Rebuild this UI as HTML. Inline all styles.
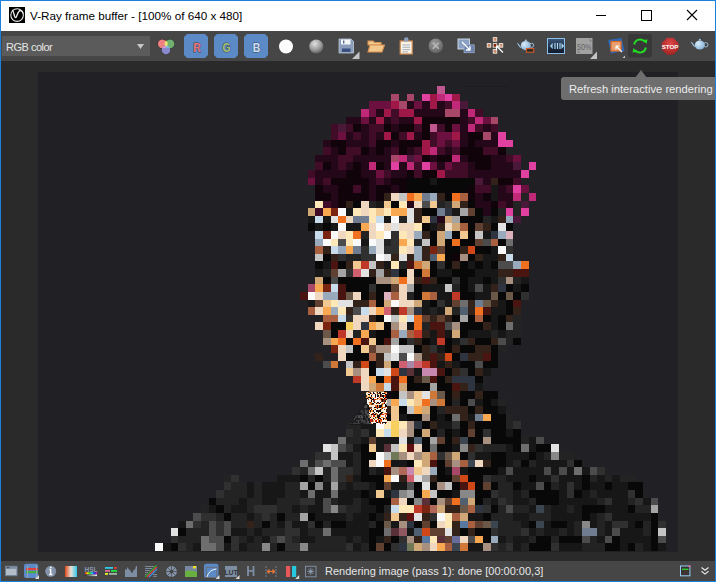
<!DOCTYPE html>
<html><head><meta charset="utf-8">
<style>
*{margin:0;padding:0;box-sizing:border-box}
html,body{width:716px;height:582px;overflow:hidden;background:#2b2b2b}
body{position:relative;font-family:"Liberation Sans",sans-serif}
.abs{position:absolute}
#win{position:absolute;left:0;top:0;width:716px;height:582px;border:1px solid #1a82dc;overflow:hidden}
#title{position:absolute;left:0;top:0;width:714px;height:30px;background:#fff}
#ttext{position:absolute;left:29px;top:8px;font-size:11.7px;color:#000;white-space:nowrap;letter-spacing:0}
#tb{position:absolute;left:0;top:30px;width:714px;height:30px;background:#464646}
#view{position:absolute;left:0;top:60px;width:714px;height:500px;background:#2a2a2a}
#img{position:absolute;left:37px;top:11px;width:640px;height:480px;background:#202025;overflow:hidden}
#sb{position:absolute;left:0;top:560px;width:714px;height:20px;background:#464646}
#stext{position:absolute;left:324px;top:4px;font-size:11px;color:#e6e6e6;white-space:nowrap}
#tip{position:absolute;left:560px;top:76px;width:160px;height:23px;background:#6e6e6e;border-radius:3px}
#tiptext{position:absolute;left:8px;top:6px;font-size:11.2px;color:#ececec;white-space:nowrap}
#dd{position:absolute;left:1px;top:5px;width:148px;height:20px;background:#5b5b5b}
#ddtext{position:absolute;left:4px;top:5px;font-size:11px;letter-spacing:-0.5px;color:#e6e6e6}
.btn{position:absolute;top:4px;width:24px;height:24px;background:#5a8ac8;border-radius:3px}
.btn span{position:absolute;left:0;top:4px;width:24px;text-align:center;font-size:14px;line-height:16px}
</style></head><body>
<div id="win">
 <div id="title">
  <svg class="abs" style="left:8px;top:6px" width="16" height="16" viewBox="9 7 16 16">
   <rect x="9" y="7" width="16" height="16" fill="#000"/>
   <circle cx="17.1" cy="15.1" r="6.3" fill="none" stroke="#e8e8e8" stroke-width="1.1"/>
   <path d="M12.2 10 C13.6 11 13.9 14 14.6 16.4 C15.2 18.2 16 17.9 16.7 16 C17.8 13 19.2 10.2 20.8 10.5 C22 10.8 22.9 12.3 23.3 13.6" fill="none" stroke="#f0f0f0" stroke-width="1.3"/>
  </svg>
  <div id="ttext">V-Ray frame buffer - [100% of 640 x 480]</div>
  <svg class="abs" style="left:593px;top:7px" width="110" height="14" viewBox="0 0 110 14">
   <path d="M2 7.5 H12" stroke="#000" stroke-width="1"/>
   <rect x="47.5" y="2.5" width="10" height="10" fill="none" stroke="#000" stroke-width="1"/>
   <path d="M93 2 L103 12 M103 2 L93 12" stroke="#000" stroke-width="1.1"/>
  </svg>
 </div>
 <div id="tb">
  <div id="dd"><div id="ddtext">RGB color</div>
   <svg class="abs" style="left:135px;top:8px" width="7" height="5"><path d="M0 0 H7 L3.5 5 Z" fill="#c8c8c8"/></svg>
  </div>
 </div>
 <div id="view"><div id="img"><svg id="mos" width="640" height="480" viewBox="0 0 84 63" shape-rendering="crispEdges" style="position:absolute;left:2.5px;top:-0.8px"><rect x="52" y="2" width="1" height="1" fill="#c05890"/><rect x="46" y="3" width="1" height="1" fill="#a84868"/><rect x="48" y="3" width="1" height="1" fill="#a84868"/><rect x="50" y="3" width="1" height="1" fill="#e040a0"/><rect x="51" y="3" width="1" height="1" fill="#a01848"/><rect x="52" y="3" width="1" height="1" fill="#c02878"/><rect x="53" y="3" width="1" height="1" fill="#e040a0"/><rect x="54" y="3" width="1" height="1" fill="#a01848"/><rect x="43" y="4" width="3" height="1" fill="#6c1040"/><rect x="46" y="4" width="1" height="1" fill="#a01848"/><rect x="47" y="4" width="1" height="1" fill="#a84868"/><rect x="48" y="4" width="1" height="1" fill="#24081a"/><rect x="49" y="4" width="1" height="1" fill="#6c1040"/><rect x="50" y="4" width="1" height="1" fill="#24081a"/><rect x="51" y="4" width="1" height="1" fill="#a01848"/><rect x="52" y="4" width="1" height="1" fill="#24081a"/><rect x="53" y="4" width="1" height="1" fill="#400c28"/><rect x="54" y="4" width="1" height="1" fill="#c02878"/><rect x="55" y="4" width="1" height="1" fill="#4a1838"/><rect x="42" y="5" width="1" height="1" fill="#c02878"/><rect x="43" y="5" width="1" height="1" fill="#6c1040"/><rect x="44" y="5" width="1" height="1" fill="#24081a"/><rect x="45" y="5" width="1" height="1" fill="#a01848"/><rect x="46" y="5" width="1" height="1" fill="#400c28"/><rect x="47" y="5" width="2" height="1" fill="#a01848"/><rect x="49" y="5" width="4" height="1" fill="#24081a"/><rect x="53" y="5" width="2" height="1" fill="#a84868"/><rect x="55" y="5" width="1" height="1" fill="#24081a"/><rect x="56" y="5" width="1" height="1" fill="#c02878"/><rect x="57" y="5" width="1" height="1" fill="#400c28"/><rect x="40" y="6" width="2" height="1" fill="#24081a"/><rect x="42" y="6" width="1" height="1" fill="#6c1040"/><rect x="43" y="6" width="1" height="1" fill="#24081a"/><rect x="44" y="6" width="1" height="1" fill="#a01848"/><rect x="45" y="6" width="1" height="1" fill="#24081a"/><rect x="46" y="6" width="1" height="1" fill="#400c28"/><rect x="47" y="6" width="2" height="1" fill="#24081a"/><rect x="49" y="6" width="1" height="1" fill="#a01848"/><rect x="50" y="6" width="5" height="1" fill="#10040a"/><rect x="55" y="6" width="1" height="1" fill="#24081a"/><rect x="56" y="6" width="1" height="1" fill="#400c28"/><rect x="57" y="6" width="1" height="1" fill="#c02878"/><rect x="58" y="6" width="1" height="1" fill="#6c1040"/><rect x="59" y="6" width="1" height="1" fill="#a84868"/><rect x="38" y="7" width="1" height="1" fill="#400c28"/><rect x="39" y="7" width="1" height="1" fill="#4a1838"/><rect x="40" y="7" width="1" height="1" fill="#400c28"/><rect x="41" y="7" width="1" height="1" fill="#10040a"/><rect x="42" y="7" width="1" height="1" fill="#24081a"/><rect x="43" y="7" width="2" height="1" fill="#400c28"/><rect x="45" y="7" width="1" height="1" fill="#10040a"/><rect x="46" y="7" width="1" height="1" fill="#24081a"/><rect x="47" y="7" width="2" height="1" fill="#10040a"/><rect x="49" y="7" width="1" height="1" fill="#400c28"/><rect x="50" y="7" width="1" height="1" fill="#10040a"/><rect x="51" y="7" width="1" height="1" fill="#c05890"/><rect x="52" y="7" width="1" height="1" fill="#400c28"/><rect x="53" y="7" width="1" height="1" fill="#10040a"/><rect x="54" y="7" width="1" height="1" fill="#6c1040"/><rect x="55" y="7" width="1" height="1" fill="#24081a"/><rect x="56" y="7" width="1" height="1" fill="#c02878"/><rect x="57" y="7" width="1" height="1" fill="#400c28"/><rect x="58" y="7" width="1" height="1" fill="#24081a"/><rect x="59" y="7" width="1" height="1" fill="#400c28"/><rect x="38" y="8" width="1" height="1" fill="#400c28"/><rect x="39" y="8" width="1" height="1" fill="#6c1040"/><rect x="40" y="8" width="1" height="1" fill="#24081a"/><rect x="41" y="8" width="1" height="1" fill="#400c28"/><rect x="42" y="8" width="1" height="1" fill="#24081a"/><rect x="43" y="8" width="1" height="1" fill="#400c28"/><rect x="44" y="8" width="1" height="1" fill="#24081a"/><rect x="45" y="8" width="1" height="1" fill="#a01848"/><rect x="46" y="8" width="1" height="1" fill="#10040a"/><rect x="47" y="8" width="1" height="1" fill="#400c28"/><rect x="48" y="8" width="1" height="1" fill="#a01848"/><rect x="49" y="8" width="1" height="1" fill="#24081a"/><rect x="50" y="8" width="1" height="1" fill="#10040a"/><rect x="51" y="8" width="1" height="1" fill="#400c28"/><rect x="52" y="8" width="2" height="1" fill="#6c1040"/><rect x="54" y="8" width="1" height="1" fill="#a01848"/><rect x="55" y="8" width="1" height="1" fill="#24081a"/><rect x="56" y="8" width="2" height="1" fill="#10040a"/><rect x="58" y="8" width="1" height="1" fill="#a84868"/><rect x="59" y="8" width="1" height="1" fill="#24081a"/><rect x="60" y="8" width="1" height="1" fill="#e040a0"/><rect x="37" y="9" width="1" height="1" fill="#24081a"/><rect x="38" y="9" width="2" height="1" fill="#10040a"/><rect x="40" y="9" width="3" height="1" fill="#24081a"/><rect x="43" y="9" width="1" height="1" fill="#400c28"/><rect x="44" y="9" width="2" height="1" fill="#10040a"/><rect x="46" y="9" width="1" height="1" fill="#24081a"/><rect x="47" y="9" width="3" height="1" fill="#10040a"/><rect x="50" y="9" width="1" height="1" fill="#a01848"/><rect x="51" y="9" width="1" height="1" fill="#400c28"/><rect x="52" y="9" width="1" height="1" fill="#6c1040"/><rect x="53" y="9" width="1" height="1" fill="#400c28"/><rect x="54" y="9" width="1" height="1" fill="#6c1040"/><rect x="55" y="9" width="1" height="1" fill="#24081a"/><rect x="56" y="9" width="1" height="1" fill="#10040a"/><rect x="57" y="9" width="3" height="1" fill="#24081a"/><rect x="60" y="9" width="2" height="1" fill="#e040a0"/><rect x="37" y="10" width="1" height="1" fill="#400c28"/><rect x="38" y="10" width="1" height="1" fill="#24081a"/><rect x="39" y="10" width="1" height="1" fill="#10040a"/><rect x="40" y="10" width="2" height="1" fill="#400c28"/><rect x="42" y="10" width="1" height="1" fill="#10040a"/><rect x="43" y="10" width="1" height="1" fill="#24081a"/><rect x="44" y="10" width="1" height="1" fill="#10040a"/><rect x="45" y="10" width="1" height="1" fill="#24081a"/><rect x="46" y="10" width="1" height="1" fill="#400c28"/><rect x="47" y="10" width="1" height="1" fill="#10040a"/><rect x="48" y="10" width="1" height="1" fill="#24081a"/><rect x="49" y="10" width="1" height="1" fill="#400c28"/><rect x="50" y="10" width="1" height="1" fill="#a01848"/><rect x="51" y="10" width="1" height="1" fill="#c02878"/><rect x="52" y="10" width="1" height="1" fill="#400c28"/><rect x="53" y="10" width="1" height="1" fill="#24081a"/><rect x="54" y="10" width="1" height="1" fill="#400c28"/><rect x="55" y="10" width="3" height="1" fill="#10040a"/><rect x="58" y="10" width="2" height="1" fill="#400c28"/><rect x="60" y="10" width="1" height="1" fill="#10040a"/><rect x="36" y="11" width="3" height="1" fill="#24081a"/><rect x="39" y="11" width="2" height="1" fill="#400c28"/><rect x="41" y="11" width="5" height="1" fill="#24081a"/><rect x="46" y="11" width="1" height="1" fill="#a84868"/><rect x="47" y="11" width="1" height="1" fill="#c02878"/><rect x="48" y="11" width="1" height="1" fill="#4a1838"/><rect x="49" y="11" width="1" height="1" fill="#6c1040"/><rect x="50" y="11" width="1" height="1" fill="#10040a"/><rect x="51" y="11" width="1" height="1" fill="#24081a"/><rect x="52" y="11" width="2" height="1" fill="#10040a"/><rect x="54" y="11" width="1" height="1" fill="#c02878"/><rect x="55" y="11" width="1" height="1" fill="#24081a"/><rect x="56" y="11" width="3" height="1" fill="#10040a"/><rect x="59" y="11" width="2" height="1" fill="#24081a"/><rect x="61" y="11" width="1" height="1" fill="#400c28"/><rect x="62" y="11" width="1" height="1" fill="#6c1040"/><rect x="36" y="12" width="1" height="1" fill="#400c28"/><rect x="37" y="12" width="1" height="1" fill="#10040a"/><rect x="38" y="12" width="1" height="1" fill="#24081a"/><rect x="39" y="12" width="1" height="1" fill="#400c28"/><rect x="40" y="12" width="1" height="1" fill="#24081a"/><rect x="41" y="12" width="1" height="1" fill="#10040a"/><rect x="42" y="12" width="1" height="1" fill="#24081a"/><rect x="43" y="12" width="1" height="1" fill="#c02878"/><rect x="44" y="12" width="1" height="1" fill="#10040a"/><rect x="45" y="12" width="1" height="1" fill="#24081a"/><rect x="46" y="12" width="1" height="1" fill="#e040a0"/><rect x="47" y="12" width="1" height="1" fill="#24081a"/><rect x="48" y="12" width="1" height="1" fill="#c02878"/><rect x="49" y="12" width="1" height="1" fill="#400c28"/><rect x="50" y="12" width="1" height="1" fill="#e040a0"/><rect x="51" y="12" width="1" height="1" fill="#6c1040"/><rect x="52" y="12" width="1" height="1" fill="#24081a"/><rect x="53" y="12" width="1" height="1" fill="#6c1040"/><rect x="54" y="12" width="2" height="1" fill="#400c28"/><rect x="56" y="12" width="1" height="1" fill="#24081a"/><rect x="57" y="12" width="2" height="1" fill="#10040a"/><rect x="59" y="12" width="3" height="1" fill="#24081a"/><rect x="62" y="12" width="1" height="1" fill="#4a1838"/><rect x="64" y="12" width="1" height="1" fill="#e040a0"/><rect x="35" y="13" width="1" height="1" fill="#400c28"/><rect x="36" y="13" width="4" height="1" fill="#24081a"/><rect x="40" y="13" width="2" height="1" fill="#10040a"/><rect x="42" y="13" width="2" height="1" fill="#24081a"/><rect x="44" y="13" width="1" height="1" fill="#6c1040"/><rect x="45" y="13" width="1" height="1" fill="#400c28"/><rect x="46" y="13" width="2" height="1" fill="#24081a"/><rect x="48" y="13" width="1" height="1" fill="#10040a"/><rect x="49" y="13" width="1" height="1" fill="#400c28"/><rect x="50" y="13" width="2" height="1" fill="#10040a"/><rect x="52" y="13" width="1" height="1" fill="#a01848"/><rect x="53" y="13" width="3" height="1" fill="#400c28"/><rect x="56" y="13" width="7" height="1" fill="#24081a"/><rect x="63" y="13" width="1" height="1" fill="#e040a0"/><rect x="35" y="14" width="1" height="1" fill="#6c1040"/><rect x="36" y="14" width="1" height="1" fill="#24081a"/><rect x="37" y="14" width="1" height="1" fill="#400c28"/><rect x="38" y="14" width="5" height="1" fill="#10040a"/><rect x="43" y="14" width="1" height="1" fill="#24081a"/><rect x="44" y="14" width="1" height="1" fill="#400c28"/><rect x="45" y="14" width="1" height="1" fill="#24081a"/><rect x="46" y="14" width="2" height="1" fill="#10040a"/><rect x="48" y="14" width="3" height="1" fill="#080808"/><rect x="51" y="14" width="1" height="1" fill="#171717"/><rect x="52" y="14" width="5" height="1" fill="#080808"/><rect x="57" y="14" width="1" height="1" fill="#4a1838"/><rect x="58" y="14" width="1" height="1" fill="#24081a"/><rect x="59" y="14" width="1" height="1" fill="#33221a"/><rect x="60" y="14" width="2" height="1" fill="#10040a"/><rect x="62" y="14" width="1" height="1" fill="#400c28"/><rect x="36" y="15" width="1" height="1" fill="#10040a"/><rect x="37" y="15" width="2" height="1" fill="#24081a"/><rect x="39" y="15" width="2" height="1" fill="#10040a"/><rect x="41" y="15" width="1" height="1" fill="#400c28"/><rect x="42" y="15" width="1" height="1" fill="#10040a"/><rect x="43" y="15" width="1" height="1" fill="#24081a"/><rect x="44" y="15" width="2" height="1" fill="#10040a"/><rect x="46" y="15" width="1" height="1" fill="#24081a"/><rect x="47" y="15" width="1" height="1" fill="#10040a"/><rect x="48" y="15" width="8" height="1" fill="#080808"/><rect x="56" y="15" width="1" height="1" fill="#10040a"/><rect x="57" y="15" width="2" height="1" fill="#400c28"/><rect x="59" y="15" width="1" height="1" fill="#171717"/><rect x="60" y="15" width="1" height="1" fill="#24081a"/><rect x="61" y="15" width="1" height="1" fill="#400c28"/><rect x="62" y="15" width="1" height="1" fill="#e040a0"/><rect x="63" y="15" width="1" height="1" fill="#6c1040"/><rect x="36" y="16" width="2" height="1" fill="#10040a"/><rect x="38" y="16" width="1" height="1" fill="#24081a"/><rect x="39" y="16" width="4" height="1" fill="#10040a"/><rect x="43" y="16" width="1" height="1" fill="#24081a"/><rect x="44" y="16" width="1" height="1" fill="#10040a"/><rect x="45" y="16" width="1" height="1" fill="#33221a"/><rect x="46" y="16" width="1" height="1" fill="#f0d8c0"/><rect x="47" y="16" width="1" height="1" fill="#c4c4c4"/><rect x="48" y="16" width="1" height="1" fill="#f07020"/><rect x="49" y="16" width="1" height="1" fill="#f8a850"/><rect x="50" y="16" width="1" height="1" fill="#707c90"/><rect x="51" y="16" width="1" height="1" fill="#98aabc"/><rect x="52" y="16" width="1" height="1" fill="#33221a"/><rect x="53" y="16" width="1" height="1" fill="#080808"/><rect x="54" y="16" width="1" height="1" fill="#f07020"/><rect x="55" y="16" width="1" height="1" fill="#a86040"/><rect x="56" y="16" width="1" height="1" fill="#10040a"/><rect x="57" y="16" width="1" height="1" fill="#24081a"/><rect x="58" y="16" width="1" height="1" fill="#10040a"/><rect x="59" y="16" width="1" height="1" fill="#171717"/><rect x="60" y="16" width="2" height="1" fill="#24081a"/><rect x="62" y="16" width="1" height="1" fill="#c02878"/><rect x="63" y="16" width="1" height="1" fill="#232323"/><rect x="64" y="16" width="1" height="1" fill="#c02878"/><rect x="36" y="17" width="1" height="1" fill="#ffe8b8"/><rect x="37" y="17" width="1" height="1" fill="#400c28"/><rect x="38" y="17" width="1" height="1" fill="#24081a"/><rect x="39" y="17" width="1" height="1" fill="#10040a"/><rect x="40" y="17" width="1" height="1" fill="#33221a"/><rect x="41" y="17" width="1" height="1" fill="#080808"/><rect x="42" y="17" width="1" height="1" fill="#f0d8c0"/><rect x="43" y="17" width="1" height="1" fill="#232323"/><rect x="44" y="17" width="1" height="1" fill="#171717"/><rect x="45" y="17" width="1" height="1" fill="#f0c890"/><rect x="46" y="17" width="1" height="1" fill="#080808"/><rect x="47" y="17" width="1" height="1" fill="#ffe8b8"/><rect x="48" y="17" width="1" height="1" fill="#24081a"/><rect x="49" y="17" width="1" height="1" fill="#f0d8c0"/><rect x="50" y="17" width="1" height="1" fill="#4c4c4c"/><rect x="51" y="17" width="1" height="1" fill="#f0c890"/><rect x="52" y="17" width="1" height="1" fill="#232323"/><rect x="53" y="17" width="1" height="1" fill="#303030"/><rect x="54" y="17" width="1" height="1" fill="#d0a878"/><rect x="55" y="17" width="1" height="1" fill="#33221a"/><rect x="56" y="17" width="1" height="1" fill="#080808"/><rect x="57" y="17" width="2" height="1" fill="#24081a"/><rect x="59" y="17" width="1" height="1" fill="#10040a"/><rect x="60" y="17" width="1" height="1" fill="#400c28"/><rect x="61" y="17" width="1" height="1" fill="#24081a"/><rect x="62" y="17" width="1" height="1" fill="#232323"/><rect x="63" y="17" width="1" height="1" fill="#4a1838"/><rect x="35" y="18" width="1" height="1" fill="#d0a878"/><rect x="36" y="18" width="1" height="1" fill="#400c28"/><rect x="37" y="18" width="1" height="1" fill="#f8a850"/><rect x="38" y="18" width="1" height="1" fill="#7a2412"/><rect x="39" y="18" width="1" height="1" fill="#fafafa"/><rect x="40" y="18" width="1" height="1" fill="#171717"/><rect x="41" y="18" width="1" height="1" fill="#ffe8b8"/><rect x="42" y="18" width="1" height="1" fill="#f0d8c0"/><rect x="43" y="18" width="1" height="1" fill="#ffe8b8"/><rect x="44" y="18" width="1" height="1" fill="#f0c890"/><rect x="45" y="18" width="1" height="1" fill="#ffe8b8"/><rect x="46" y="18" width="2" height="1" fill="#f8a850"/><rect x="48" y="18" width="1" height="1" fill="#e2e2e2"/><rect x="49" y="18" width="1" height="1" fill="#33221a"/><rect x="50" y="18" width="2" height="1" fill="#080808"/><rect x="52" y="18" width="1" height="1" fill="#707c90"/><rect x="53" y="18" width="1" height="1" fill="#2e3440"/><rect x="54" y="18" width="1" height="1" fill="#171717"/><rect x="55" y="18" width="1" height="1" fill="#a4a4a4"/><rect x="56" y="18" width="1" height="1" fill="#604030"/><rect x="57" y="18" width="1" height="1" fill="#080808"/><rect x="58" y="18" width="1" height="1" fill="#24081a"/><rect x="59" y="18" width="1" height="1" fill="#080808"/><rect x="60" y="18" width="1" height="1" fill="#232323"/><rect x="61" y="18" width="1" height="1" fill="#e040a0"/><rect x="62" y="18" width="1" height="1" fill="#232323"/><rect x="63" y="18" width="1" height="1" fill="#e040a0"/><rect x="35" y="19" width="1" height="1" fill="#171717"/><rect x="36" y="19" width="1" height="1" fill="#c8dcec"/><rect x="37" y="19" width="1" height="1" fill="#171717"/><rect x="38" y="19" width="1" height="1" fill="#e2e2e2"/><rect x="39" y="19" width="1" height="1" fill="#f07020"/><rect x="40" y="19" width="1" height="1" fill="#f0d8c0"/><rect x="41" y="19" width="2" height="1" fill="#707c90"/><rect x="43" y="19" width="1" height="1" fill="#ffe8b8"/><rect x="44" y="19" width="1" height="1" fill="#c8dcec"/><rect x="45" y="19" width="1" height="1" fill="#171717"/><rect x="46" y="19" width="1" height="1" fill="#fafafa"/><rect x="47" y="19" width="1" height="1" fill="#232323"/><rect x="48" y="19" width="1" height="1" fill="#e2e2e2"/><rect x="49" y="19" width="1" height="1" fill="#33221a"/><rect x="50" y="19" width="1" height="1" fill="#f0c890"/><rect x="51" y="19" width="1" height="1" fill="#2e3440"/><rect x="52" y="19" width="1" height="1" fill="#24081a"/><rect x="53" y="19" width="1" height="1" fill="#d0a878"/><rect x="54" y="19" width="1" height="1" fill="#a4a4a4"/><rect x="55" y="19" width="3" height="1" fill="#080808"/><rect x="58" y="19" width="1" height="1" fill="#232323"/><rect x="59" y="19" width="1" height="1" fill="#171717"/><rect x="60" y="19" width="1" height="1" fill="#33221a"/><rect x="61" y="19" width="1" height="1" fill="#98aabc"/><rect x="62" y="19" width="1" height="1" fill="#4a1838"/><rect x="35" y="20" width="1" height="1" fill="#080808"/><rect x="36" y="20" width="1" height="1" fill="#171717"/><rect x="37" y="20" width="1" height="1" fill="#080808"/><rect x="38" y="20" width="1" height="1" fill="#171717"/><rect x="39" y="20" width="1" height="1" fill="#fafafa"/><rect x="40" y="20" width="2" height="1" fill="#171717"/><rect x="42" y="20" width="1" height="1" fill="#f8a850"/><rect x="43" y="20" width="1" height="1" fill="#f0d8c0"/><rect x="44" y="20" width="1" height="1" fill="#fafafa"/><rect x="45" y="20" width="1" height="1" fill="#f0d8c0"/><rect x="46" y="20" width="1" height="1" fill="#e2e2e2"/><rect x="47" y="20" width="2" height="1" fill="#f0d8c0"/><rect x="49" y="20" width="1" height="1" fill="#ffe8b8"/><rect x="50" y="20" width="1" height="1" fill="#080808"/><rect x="51" y="20" width="1" height="1" fill="#171717"/><rect x="52" y="20" width="1" height="1" fill="#33221a"/><rect x="53" y="20" width="1" height="1" fill="#f0d8c0"/><rect x="54" y="20" width="1" height="1" fill="#d0a878"/><rect x="55" y="20" width="1" height="1" fill="#a86040"/><rect x="56" y="20" width="1" height="1" fill="#080808"/><rect x="57" y="20" width="1" height="1" fill="#604030"/><rect x="58" y="20" width="1" height="1" fill="#33221a"/><rect x="59" y="20" width="1" height="1" fill="#080808"/><rect x="60" y="20" width="1" height="1" fill="#e2e2e2"/><rect x="61" y="20" width="1" height="1" fill="#080808"/><rect x="36" y="21" width="1" height="1" fill="#c8dcec"/><rect x="37" y="21" width="1" height="1" fill="#7a2412"/><rect x="38" y="21" width="1" height="1" fill="#fafafa"/><rect x="39" y="21" width="1" height="1" fill="#f0d8c0"/><rect x="40" y="21" width="1" height="1" fill="#ffe8b8"/><rect x="41" y="21" width="1" height="1" fill="#f07020"/><rect x="42" y="21" width="1" height="1" fill="#232323"/><rect x="43" y="21" width="1" height="1" fill="#f0d8c0"/><rect x="44" y="21" width="1" height="1" fill="#ffe8b8"/><rect x="45" y="21" width="1" height="1" fill="#fafafa"/><rect x="46" y="21" width="1" height="1" fill="#303030"/><rect x="47" y="21" width="1" height="1" fill="#ffe8b8"/><rect x="48" y="21" width="1" height="1" fill="#f0d8c0"/><rect x="49" y="21" width="1" height="1" fill="#98aabc"/><rect x="50" y="21" width="1" height="1" fill="#33221a"/><rect x="51" y="21" width="1" height="1" fill="#080808"/><rect x="52" y="21" width="1" height="1" fill="#d0a878"/><rect x="53" y="21" width="1" height="1" fill="#98aabc"/><rect x="54" y="21" width="1" height="1" fill="#080808"/><rect x="55" y="21" width="1" height="1" fill="#f0c890"/><rect x="56" y="21" width="1" height="1" fill="#080808"/><rect x="57" y="21" width="1" height="1" fill="#c4c4c4"/><rect x="58" y="21" width="1" height="1" fill="#171717"/><rect x="59" y="21" width="1" height="1" fill="#2e3440"/><rect x="60" y="21" width="1" height="1" fill="#98aabc"/><rect x="61" y="21" width="1" height="1" fill="#dcb0bc"/><rect x="36" y="22" width="1" height="1" fill="#98aabc"/><rect x="37" y="22" width="1" height="1" fill="#fafafa"/><rect x="38" y="22" width="1" height="1" fill="#ffe8b8"/><rect x="39" y="22" width="1" height="1" fill="#4c4c4c"/><rect x="40" y="22" width="1" height="1" fill="#ffe8b8"/><rect x="41" y="22" width="1" height="1" fill="#fafafa"/><rect x="42" y="22" width="1" height="1" fill="#171717"/><rect x="43" y="22" width="1" height="1" fill="#fafafa"/><rect x="44" y="22" width="1" height="1" fill="#e2e2e2"/><rect x="45" y="22" width="1" height="1" fill="#232323"/><rect x="46" y="22" width="1" height="1" fill="#303030"/><rect x="47" y="22" width="1" height="1" fill="#f8a850"/><rect x="48" y="22" width="1" height="1" fill="#ffe8b8"/><rect x="49" y="22" width="1" height="1" fill="#232323"/><rect x="50" y="22" width="1" height="1" fill="#c4c4c4"/><rect x="51" y="22" width="1" height="1" fill="#080808"/><rect x="52" y="22" width="1" height="1" fill="#d0a878"/><rect x="53" y="22" width="1" height="1" fill="#080808"/><rect x="54" y="22" width="1" height="1" fill="#f07020"/><rect x="55" y="22" width="2" height="1" fill="#080808"/><rect x="57" y="22" width="1" height="1" fill="#604030"/><rect x="58" y="22" width="1" height="1" fill="#4c4c4c"/><rect x="59" y="22" width="1" height="1" fill="#a86040"/><rect x="60" y="22" width="1" height="1" fill="#080808"/><rect x="61" y="22" width="1" height="1" fill="#6e6e6e"/><rect x="36" y="23" width="1" height="1" fill="#a86040"/><rect x="37" y="23" width="1" height="1" fill="#33221a"/><rect x="38" y="23" width="1" height="1" fill="#c8dcec"/><rect x="39" y="23" width="1" height="1" fill="#98aabc"/><rect x="40" y="23" width="1" height="1" fill="#f8a850"/><rect x="41" y="23" width="1" height="1" fill="#707c90"/><rect x="42" y="23" width="1" height="1" fill="#303030"/><rect x="43" y="23" width="1" height="1" fill="#98aabc"/><rect x="44" y="23" width="1" height="1" fill="#e2e2e2"/><rect x="45" y="23" width="2" height="1" fill="#303030"/><rect x="47" y="23" width="1" height="1" fill="#ffe8b8"/><rect x="48" y="23" width="1" height="1" fill="#f0d8c0"/><rect x="49" y="23" width="1" height="1" fill="#98aabc"/><rect x="50" y="23" width="1" height="1" fill="#33221a"/><rect x="51" y="23" width="1" height="1" fill="#7a2412"/><rect x="52" y="23" width="1" height="1" fill="#604030"/><rect x="53" y="23" width="2" height="1" fill="#080808"/><rect x="55" y="23" width="1" height="1" fill="#33221a"/><rect x="56" y="23" width="1" height="1" fill="#d04818"/><rect x="57" y="23" width="2" height="1" fill="#080808"/><rect x="59" y="23" width="1" height="1" fill="#171717"/><rect x="60" y="23" width="1" height="1" fill="#fafafa"/><rect x="61" y="23" width="1" height="1" fill="#303030"/><rect x="36" y="24" width="1" height="1" fill="#c4c4c4"/><rect x="37" y="24" width="1" height="1" fill="#080808"/><rect x="38" y="24" width="1" height="1" fill="#33221a"/><rect x="39" y="24" width="1" height="1" fill="#303030"/><rect x="40" y="24" width="2" height="1" fill="#232323"/><rect x="42" y="24" width="2" height="1" fill="#303030"/><rect x="44" y="24" width="1" height="1" fill="#fafafa"/><rect x="45" y="24" width="1" height="1" fill="#e2e2e2"/><rect x="46" y="24" width="1" height="1" fill="#33221a"/><rect x="47" y="24" width="1" height="1" fill="#e2e2e2"/><rect x="48" y="24" width="1" height="1" fill="#33221a"/><rect x="49" y="24" width="1" height="1" fill="#98aabc"/><rect x="50" y="24" width="1" height="1" fill="#33221a"/><rect x="51" y="24" width="1" height="1" fill="#506070"/><rect x="52" y="24" width="1" height="1" fill="#f8a850"/><rect x="53" y="24" width="1" height="1" fill="#080808"/><rect x="54" y="24" width="1" height="1" fill="#10040a"/><rect x="55" y="24" width="1" height="1" fill="#a89080"/><rect x="56" y="24" width="1" height="1" fill="#080808"/><rect x="57" y="24" width="1" height="1" fill="#33221a"/><rect x="58" y="24" width="2" height="1" fill="#171717"/><rect x="60" y="24" width="1" height="1" fill="#33221a"/><rect x="61" y="24" width="1" height="1" fill="#c8dcec"/><rect x="36" y="25" width="1" height="1" fill="#080808"/><rect x="37" y="25" width="1" height="1" fill="#171717"/><rect x="38" y="25" width="1" height="1" fill="#4a1410"/><rect x="39" y="25" width="1" height="1" fill="#080808"/><rect x="40" y="25" width="1" height="1" fill="#33221a"/><rect x="41" y="25" width="1" height="1" fill="#f0c890"/><rect x="42" y="25" width="1" height="1" fill="#c03828"/><rect x="43" y="25" width="1" height="1" fill="#c4c4c4"/><rect x="44" y="25" width="1" height="1" fill="#33221a"/><rect x="45" y="25" width="1" height="1" fill="#171717"/><rect x="46" y="25" width="1" height="1" fill="#ffe8b8"/><rect x="47" y="25" width="1" height="1" fill="#232323"/><rect x="48" y="25" width="1" height="1" fill="#4a1410"/><rect x="49" y="25" width="1" height="1" fill="#d07838"/><rect x="50" y="25" width="1" height="1" fill="#d0a878"/><rect x="51" y="25" width="1" height="1" fill="#080808"/><rect x="52" y="25" width="1" height="1" fill="#303030"/><rect x="53" y="25" width="1" height="1" fill="#080808"/><rect x="54" y="25" width="1" height="1" fill="#33221a"/><rect x="55" y="25" width="1" height="1" fill="#080808"/><rect x="56" y="25" width="1" height="1" fill="#171717"/><rect x="57" y="25" width="1" height="1" fill="#080808"/><rect x="58" y="25" width="1" height="1" fill="#171717"/><rect x="59" y="25" width="1" height="1" fill="#080808"/><rect x="60" y="25" width="2" height="1" fill="#4c4c4c"/><rect x="62" y="25" width="1" height="1" fill="#98aabc"/><rect x="63" y="25" width="1" height="1" fill="#f07020"/><rect x="36" y="26" width="1" height="1" fill="#171717"/><rect x="37" y="26" width="1" height="1" fill="#232323"/><rect x="38" y="26" width="1" height="1" fill="#604030"/><rect x="39" y="26" width="1" height="1" fill="#a4a4a4"/><rect x="40" y="26" width="1" height="1" fill="#303030"/><rect x="41" y="26" width="1" height="1" fill="#d06070"/><rect x="42" y="26" width="1" height="1" fill="#e2e2e2"/><rect x="43" y="26" width="1" height="1" fill="#33221a"/><rect x="44" y="26" width="1" height="1" fill="#a4a4a4"/><rect x="45" y="26" width="1" height="1" fill="#33221a"/><rect x="46" y="26" width="1" height="1" fill="#2e3440"/><rect x="47" y="26" width="1" height="1" fill="#080808"/><rect x="48" y="26" width="1" height="1" fill="#f0d8c0"/><rect x="49" y="26" width="1" height="1" fill="#080808"/><rect x="50" y="26" width="1" height="1" fill="#d07838"/><rect x="51" y="26" width="1" height="1" fill="#080808"/><rect x="52" y="26" width="2" height="1" fill="#171717"/><rect x="54" y="26" width="3" height="1" fill="#080808"/><rect x="57" y="26" width="3" height="1" fill="#171717"/><rect x="60" y="26" width="2" height="1" fill="#33221a"/><rect x="62" y="26" width="2" height="1" fill="#4a1410"/><rect x="36" y="27" width="1" height="1" fill="#d0a878"/><rect x="37" y="27" width="1" height="1" fill="#080808"/><rect x="38" y="27" width="1" height="1" fill="#4c4c4c"/><rect x="39" y="27" width="5" height="1" fill="#080808"/><rect x="44" y="27" width="2" height="1" fill="#a89080"/><rect x="46" y="27" width="1" height="1" fill="#d0a878"/><rect x="47" y="27" width="1" height="1" fill="#f07020"/><rect x="48" y="27" width="1" height="1" fill="#f0d8c0"/><rect x="49" y="27" width="1" height="1" fill="#33221a"/><rect x="50" y="27" width="1" height="1" fill="#4a1410"/><rect x="51" y="27" width="1" height="1" fill="#33221a"/><rect x="52" y="27" width="2" height="1" fill="#080808"/><rect x="54" y="27" width="1" height="1" fill="#303030"/><rect x="55" y="27" width="1" height="1" fill="#080808"/><rect x="56" y="27" width="2" height="1" fill="#171717"/><rect x="58" y="27" width="1" height="1" fill="#080808"/><rect x="59" y="27" width="1" height="1" fill="#171717"/><rect x="60" y="27" width="1" height="1" fill="#303030"/><rect x="61" y="27" width="1" height="1" fill="#a89080"/><rect x="62" y="27" width="1" height="1" fill="#232323"/><rect x="63" y="27" width="1" height="1" fill="#171717"/><rect x="35" y="28" width="1" height="1" fill="#a84868"/><rect x="36" y="28" width="1" height="1" fill="#f8a850"/><rect x="37" y="28" width="1" height="1" fill="#7a2412"/><rect x="38" y="28" width="1" height="1" fill="#c8dcec"/><rect x="39" y="28" width="1" height="1" fill="#4a1410"/><rect x="40" y="28" width="3" height="1" fill="#080808"/><rect x="43" y="28" width="1" height="1" fill="#303030"/><rect x="44" y="28" width="2" height="1" fill="#080808"/><rect x="46" y="28" width="1" height="1" fill="#604030"/><rect x="47" y="28" width="1" height="1" fill="#f0d8c0"/><rect x="48" y="28" width="1" height="1" fill="#a4a4a4"/><rect x="49" y="28" width="1" height="1" fill="#080808"/><rect x="50" y="28" width="3" height="1" fill="#171717"/><rect x="53" y="28" width="1" height="1" fill="#c4c4c4"/><rect x="54" y="28" width="1" height="1" fill="#232323"/><rect x="55" y="28" width="1" height="1" fill="#080808"/><rect x="56" y="28" width="1" height="1" fill="#171717"/><rect x="57" y="28" width="1" height="1" fill="#4c4c4c"/><rect x="58" y="28" width="1" height="1" fill="#171717"/><rect x="59" y="28" width="1" height="1" fill="#33221a"/><rect x="60" y="28" width="1" height="1" fill="#2e3440"/><rect x="61" y="28" width="1" height="1" fill="#080808"/><rect x="62" y="28" width="1" height="1" fill="#171717"/><rect x="63" y="28" width="1" height="1" fill="#080808"/><rect x="34" y="29" width="1" height="1" fill="#4a1410"/><rect x="35" y="29" width="1" height="1" fill="#fafafa"/><rect x="36" y="29" width="1" height="1" fill="#f0d8c0"/><rect x="37" y="29" width="2" height="1" fill="#98aabc"/><rect x="39" y="29" width="1" height="1" fill="#4a1410"/><rect x="40" y="29" width="1" height="1" fill="#6a5848"/><rect x="41" y="29" width="1" height="1" fill="#f0d8c0"/><rect x="42" y="29" width="1" height="1" fill="#080808"/><rect x="43" y="29" width="1" height="1" fill="#33221a"/><rect x="44" y="29" width="1" height="1" fill="#080808"/><rect x="45" y="29" width="1" height="1" fill="#dcb0bc"/><rect x="46" y="29" width="1" height="1" fill="#a86040"/><rect x="47" y="29" width="1" height="1" fill="#f0d8c0"/><rect x="48" y="29" width="1" height="1" fill="#232323"/><rect x="49" y="29" width="1" height="1" fill="#080808"/><rect x="50" y="29" width="1" height="1" fill="#d07838"/><rect x="51" y="29" width="1" height="1" fill="#a86040"/><rect x="52" y="29" width="2" height="1" fill="#171717"/><rect x="54" y="29" width="1" height="1" fill="#c03828"/><rect x="55" y="29" width="2" height="1" fill="#080808"/><rect x="57" y="29" width="2" height="1" fill="#171717"/><rect x="59" y="29" width="1" height="1" fill="#6a5848"/><rect x="60" y="29" width="1" height="1" fill="#080808"/><rect x="61" y="29" width="1" height="1" fill="#6a5848"/><rect x="62" y="29" width="1" height="1" fill="#080808"/><rect x="63" y="29" width="1" height="1" fill="#303030"/><rect x="35" y="30" width="1" height="1" fill="#171717"/><rect x="36" y="30" width="1" height="1" fill="#604030"/><rect x="37" y="30" width="1" height="1" fill="#f0c890"/><rect x="38" y="30" width="1" height="1" fill="#ffe8b8"/><rect x="39" y="30" width="2" height="1" fill="#e2e2e2"/><rect x="41" y="30" width="2" height="1" fill="#33221a"/><rect x="43" y="30" width="1" height="1" fill="#a86040"/><rect x="44" y="30" width="1" height="1" fill="#080808"/><rect x="45" y="30" width="1" height="1" fill="#d0a878"/><rect x="46" y="30" width="1" height="1" fill="#fafafa"/><rect x="47" y="30" width="2" height="1" fill="#f0d8c0"/><rect x="49" y="30" width="1" height="1" fill="#d0a878"/><rect x="50" y="30" width="1" height="1" fill="#171717"/><rect x="51" y="30" width="1" height="1" fill="#080808"/><rect x="52" y="30" width="1" height="1" fill="#303030"/><rect x="53" y="30" width="1" height="1" fill="#171717"/><rect x="54" y="30" width="1" height="1" fill="#604030"/><rect x="55" y="30" width="1" height="1" fill="#6e6e6e"/><rect x="56" y="30" width="1" height="1" fill="#33221a"/><rect x="57" y="30" width="1" height="1" fill="#707c90"/><rect x="58" y="30" width="1" height="1" fill="#6a5848"/><rect x="59" y="30" width="1" height="1" fill="#33221a"/><rect x="60" y="30" width="1" height="1" fill="#171717"/><rect x="61" y="30" width="1" height="1" fill="#080808"/><rect x="62" y="30" width="1" height="1" fill="#4a1410"/><rect x="35" y="31" width="1" height="1" fill="#a86040"/><rect x="36" y="31" width="1" height="1" fill="#f0d8c0"/><rect x="37" y="31" width="1" height="1" fill="#f8a850"/><rect x="38" y="31" width="1" height="1" fill="#98aabc"/><rect x="39" y="31" width="1" height="1" fill="#ffe8b8"/><rect x="40" y="31" width="1" height="1" fill="#33221a"/><rect x="41" y="31" width="1" height="1" fill="#4c4c4c"/><rect x="42" y="31" width="1" height="1" fill="#c8dcec"/><rect x="43" y="31" width="1" height="1" fill="#f0d8c0"/><rect x="44" y="31" width="1" height="1" fill="#f8a850"/><rect x="45" y="31" width="1" height="1" fill="#d06070"/><rect x="46" y="31" width="1" height="1" fill="#33221a"/><rect x="47" y="31" width="1" height="1" fill="#c03828"/><rect x="48" y="31" width="1" height="1" fill="#a89080"/><rect x="49" y="31" width="1" height="1" fill="#2e3440"/><rect x="50" y="31" width="1" height="1" fill="#171717"/><rect x="51" y="31" width="1" height="1" fill="#232323"/><rect x="52" y="31" width="1" height="1" fill="#171717"/><rect x="53" y="31" width="1" height="1" fill="#d0a878"/><rect x="54" y="31" width="1" height="1" fill="#232323"/><rect x="55" y="31" width="1" height="1" fill="#506070"/><rect x="56" y="31" width="1" height="1" fill="#33221a"/><rect x="57" y="31" width="1" height="1" fill="#f07020"/><rect x="58" y="31" width="1" height="1" fill="#4a1410"/><rect x="59" y="31" width="2" height="1" fill="#171717"/><rect x="61" y="31" width="1" height="1" fill="#080808"/><rect x="62" y="31" width="1" height="1" fill="#33221a"/><rect x="37" y="32" width="2" height="1" fill="#a86040"/><rect x="39" y="32" width="1" height="1" fill="#c8dcec"/><rect x="40" y="32" width="1" height="1" fill="#303030"/><rect x="41" y="32" width="2" height="1" fill="#f0d8c0"/><rect x="43" y="32" width="1" height="1" fill="#33221a"/><rect x="44" y="32" width="1" height="1" fill="#080808"/><rect x="45" y="32" width="1" height="1" fill="#fafafa"/><rect x="46" y="32" width="1" height="1" fill="#c4c4c4"/><rect x="47" y="32" width="1" height="1" fill="#ffe8b8"/><rect x="48" y="32" width="1" height="1" fill="#c8dcec"/><rect x="49" y="32" width="1" height="1" fill="#f07020"/><rect x="50" y="32" width="1" height="1" fill="#604030"/><rect x="51" y="32" width="1" height="1" fill="#33221a"/><rect x="52" y="32" width="1" height="1" fill="#604030"/><rect x="53" y="32" width="1" height="1" fill="#33221a"/><rect x="54" y="32" width="1" height="1" fill="#080808"/><rect x="55" y="32" width="1" height="1" fill="#a4a4a4"/><rect x="56" y="32" width="1" height="1" fill="#080808"/><rect x="57" y="32" width="1" height="1" fill="#a86040"/><rect x="58" y="32" width="1" height="1" fill="#080808"/><rect x="59" y="32" width="1" height="1" fill="#171717"/><rect x="60" y="32" width="1" height="1" fill="#080808"/><rect x="61" y="32" width="1" height="1" fill="#33221a"/><rect x="62" y="32" width="1" height="1" fill="#232323"/><rect x="36" y="33" width="1" height="1" fill="#f0d8c0"/><rect x="37" y="33" width="1" height="1" fill="#7a2412"/><rect x="38" y="33" width="2" height="1" fill="#080808"/><rect x="40" y="33" width="1" height="1" fill="#f8d060"/><rect x="41" y="33" width="1" height="1" fill="#f0d8c0"/><rect x="42" y="33" width="1" height="1" fill="#2e3440"/><rect x="43" y="33" width="1" height="1" fill="#f8a850"/><rect x="44" y="33" width="1" height="1" fill="#f0c890"/><rect x="45" y="33" width="1" height="1" fill="#080808"/><rect x="46" y="33" width="1" height="1" fill="#a89080"/><rect x="47" y="33" width="1" height="1" fill="#f0d8c0"/><rect x="48" y="33" width="1" height="1" fill="#171717"/><rect x="49" y="33" width="1" height="1" fill="#f07020"/><rect x="50" y="33" width="1" height="1" fill="#232323"/><rect x="51" y="33" width="2" height="1" fill="#4a1410"/><rect x="53" y="33" width="1" height="1" fill="#4c4c4c"/><rect x="54" y="33" width="1" height="1" fill="#a89080"/><rect x="55" y="33" width="3" height="1" fill="#080808"/><rect x="58" y="33" width="1" height="1" fill="#33221a"/><rect x="59" y="33" width="1" height="1" fill="#171717"/><rect x="60" y="33" width="1" height="1" fill="#080808"/><rect x="61" y="33" width="1" height="1" fill="#6e6e6e"/><rect x="62" y="33" width="1" height="1" fill="#232323"/><rect x="37" y="34" width="1" height="1" fill="#6a5848"/><rect x="38" y="34" width="1" height="1" fill="#080808"/><rect x="39" y="34" width="1" height="1" fill="#c03828"/><rect x="40" y="34" width="1" height="1" fill="#f0d8c0"/><rect x="41" y="34" width="1" height="1" fill="#232323"/><rect x="42" y="34" width="1" height="1" fill="#f8a850"/><rect x="43" y="34" width="1" height="1" fill="#171717"/><rect x="44" y="34" width="2" height="1" fill="#080808"/><rect x="46" y="34" width="1" height="1" fill="#a86040"/><rect x="47" y="34" width="1" height="1" fill="#98aabc"/><rect x="48" y="34" width="1" height="1" fill="#a86040"/><rect x="49" y="34" width="1" height="1" fill="#c03828"/><rect x="50" y="34" width="1" height="1" fill="#33221a"/><rect x="51" y="34" width="1" height="1" fill="#171717"/><rect x="52" y="34" width="1" height="1" fill="#4a1410"/><rect x="53" y="34" width="1" height="1" fill="#171717"/><rect x="54" y="34" width="1" height="1" fill="#d0a878"/><rect x="55" y="34" width="1" height="1" fill="#080808"/><rect x="56" y="34" width="3" height="1" fill="#171717"/><rect x="59" y="34" width="1" height="1" fill="#232323"/><rect x="60" y="34" width="1" height="1" fill="#171717"/><rect x="61" y="34" width="2" height="1" fill="#232323"/><rect x="37" y="35" width="1" height="1" fill="#a89080"/><rect x="38" y="35" width="1" height="1" fill="#f8a850"/><rect x="39" y="35" width="1" height="1" fill="#f07020"/><rect x="40" y="35" width="1" height="1" fill="#080808"/><rect x="41" y="35" width="1" height="1" fill="#f07020"/><rect x="42" y="35" width="1" height="1" fill="#4a1410"/><rect x="43" y="35" width="1" height="1" fill="#f0c890"/><rect x="44" y="35" width="1" height="1" fill="#080808"/><rect x="45" y="35" width="1" height="1" fill="#4a1410"/><rect x="46" y="35" width="1" height="1" fill="#a4a4a4"/><rect x="47" y="35" width="1" height="1" fill="#080808"/><rect x="48" y="35" width="1" height="1" fill="#303030"/><rect x="49" y="35" width="1" height="1" fill="#33221a"/><rect x="50" y="35" width="1" height="1" fill="#080808"/><rect x="51" y="35" width="1" height="1" fill="#171717"/><rect x="52" y="35" width="1" height="1" fill="#c03828"/><rect x="53" y="35" width="1" height="1" fill="#080808"/><rect x="54" y="35" width="1" height="1" fill="#171717"/><rect x="55" y="35" width="1" height="1" fill="#303030"/><rect x="56" y="35" width="1" height="1" fill="#33221a"/><rect x="57" y="35" width="2" height="1" fill="#080808"/><rect x="59" y="35" width="1" height="1" fill="#33221a"/><rect x="60" y="35" width="1" height="1" fill="#4c4c4c"/><rect x="61" y="35" width="1" height="1" fill="#232323"/><rect x="62" y="35" width="1" height="1" fill="#080808"/><rect x="38" y="36" width="1" height="1" fill="#7a2412"/><rect x="39" y="36" width="1" height="1" fill="#f0d8c0"/><rect x="40" y="36" width="1" height="1" fill="#c4c4c4"/><rect x="41" y="36" width="1" height="1" fill="#080808"/><rect x="42" y="36" width="1" height="1" fill="#f0c890"/><rect x="43" y="36" width="1" height="1" fill="#604030"/><rect x="44" y="36" width="2" height="1" fill="#a89080"/><rect x="46" y="36" width="1" height="1" fill="#fafafa"/><rect x="47" y="36" width="2" height="1" fill="#c4c4c4"/><rect x="49" y="36" width="1" height="1" fill="#080808"/><rect x="50" y="36" width="1" height="1" fill="#33221a"/><rect x="51" y="36" width="1" height="1" fill="#303030"/><rect x="52" y="36" width="1" height="1" fill="#171717"/><rect x="53" y="36" width="1" height="1" fill="#080808"/><rect x="54" y="36" width="1" height="1" fill="#33221a"/><rect x="55" y="36" width="2" height="1" fill="#080808"/><rect x="57" y="36" width="2" height="1" fill="#33221a"/><rect x="59" y="36" width="1" height="1" fill="#080808"/><rect x="60" y="36" width="1" height="1" fill="#232323"/><rect x="36" y="37" width="1" height="1" fill="#33221a"/><rect x="39" y="37" width="1" height="1" fill="#f0d8c0"/><rect x="40" y="37" width="3" height="1" fill="#080808"/><rect x="43" y="37" width="1" height="1" fill="#a86040"/><rect x="44" y="37" width="1" height="1" fill="#33221a"/><rect x="45" y="37" width="1" height="1" fill="#c4c4c4"/><rect x="46" y="37" width="1" height="1" fill="#e2e2e2"/><rect x="47" y="37" width="1" height="1" fill="#4c4c4c"/><rect x="48" y="37" width="1" height="1" fill="#fafafa"/><rect x="49" y="37" width="1" height="1" fill="#a89080"/><rect x="50" y="37" width="1" height="1" fill="#33221a"/><rect x="51" y="37" width="1" height="1" fill="#4a1410"/><rect x="52" y="37" width="1" height="1" fill="#33221a"/><rect x="53" y="37" width="1" height="1" fill="#d04818"/><rect x="54" y="37" width="1" height="1" fill="#080808"/><rect x="55" y="37" width="1" height="1" fill="#2e3440"/><rect x="56" y="37" width="2" height="1" fill="#33221a"/><rect x="58" y="37" width="1" height="1" fill="#4a1410"/><rect x="59" y="37" width="1" height="1" fill="#080808"/><rect x="37" y="38" width="1" height="1" fill="#4c4c4c"/><rect x="38" y="38" width="1" height="1" fill="#d07838"/><rect x="40" y="38" width="1" height="1" fill="#c4c4c4"/><rect x="41" y="38" width="1" height="1" fill="#33221a"/><rect x="42" y="38" width="1" height="1" fill="#d04818"/><rect x="43" y="38" width="1" height="1" fill="#080808"/><rect x="44" y="38" width="1" height="1" fill="#33221a"/><rect x="45" y="38" width="1" height="1" fill="#d0a878"/><rect x="46" y="38" width="1" height="1" fill="#080808"/><rect x="47" y="38" width="1" height="1" fill="#d06070"/><rect x="48" y="38" width="1" height="1" fill="#a888a8"/><rect x="49" y="38" width="1" height="1" fill="#d06070"/><rect x="50" y="38" width="1" height="1" fill="#c03828"/><rect x="51" y="38" width="1" height="1" fill="#4a1410"/><rect x="52" y="38" width="1" height="1" fill="#171717"/><rect x="53" y="38" width="1" height="1" fill="#33221a"/><rect x="54" y="38" width="1" height="1" fill="#171717"/><rect x="55" y="38" width="2" height="1" fill="#080808"/><rect x="57" y="38" width="1" height="1" fill="#4c4c4c"/><rect x="58" y="38" width="2" height="1" fill="#080808"/><rect x="40" y="39" width="1" height="1" fill="#f0c890"/><rect x="41" y="39" width="1" height="1" fill="#a89080"/><rect x="42" y="39" width="1" height="1" fill="#f0d8c0"/><rect x="43" y="39" width="1" height="1" fill="#080808"/><rect x="44" y="39" width="1" height="1" fill="#c8dcec"/><rect x="45" y="39" width="1" height="1" fill="#e2e2e2"/><rect x="46" y="39" width="1" height="1" fill="#d04818"/><rect x="47" y="39" width="1" height="1" fill="#2e3440"/><rect x="48" y="39" width="1" height="1" fill="#5a3038"/><rect x="49" y="39" width="1" height="1" fill="#171717"/><rect x="50" y="39" width="2" height="1" fill="#c888b0"/><rect x="52" y="39" width="1" height="1" fill="#4a1410"/><rect x="53" y="39" width="1" height="1" fill="#080808"/><rect x="54" y="39" width="1" height="1" fill="#33221a"/><rect x="55" y="39" width="1" height="1" fill="#303030"/><rect x="56" y="39" width="1" height="1" fill="#080808"/><rect x="57" y="39" width="1" height="1" fill="#33221a"/><rect x="58" y="39" width="1" height="1" fill="#171717"/><rect x="41" y="40" width="1" height="1" fill="#c03828"/><rect x="42" y="40" width="1" height="1" fill="#f0d8c0"/><rect x="43" y="40" width="1" height="1" fill="#f8a850"/><rect x="44" y="40" width="1" height="1" fill="#080808"/><rect x="45" y="40" width="1" height="1" fill="#f07020"/><rect x="46" y="40" width="1" height="1" fill="#4a1410"/><rect x="47" y="40" width="1" height="1" fill="#f07020"/><rect x="48" y="40" width="1" height="1" fill="#080808"/><rect x="49" y="40" width="1" height="1" fill="#33221a"/><rect x="50" y="40" width="1" height="1" fill="#6a5848"/><rect x="51" y="40" width="1" height="1" fill="#4a1410"/><rect x="52" y="40" width="1" height="1" fill="#080808"/><rect x="53" y="40" width="1" height="1" fill="#33221a"/><rect x="54" y="40" width="3" height="1" fill="#2e3440"/><rect x="57" y="40" width="1" height="1" fill="#080808"/><rect x="42" y="41" width="1" height="1" fill="#f0d8c0"/><rect x="43" y="41" width="1" height="1" fill="#d0a878"/><rect x="44" y="41" width="1" height="1" fill="#d07838"/><rect x="45" y="41" width="1" height="1" fill="#c8dcec"/><rect x="46" y="41" width="1" height="1" fill="#4a1410"/><rect x="47" y="41" width="1" height="1" fill="#d0a878"/><rect x="48" y="41" width="3" height="1" fill="#080808"/><rect x="51" y="41" width="1" height="1" fill="#a4a4a4"/><rect x="52" y="41" width="2" height="1" fill="#080808"/><rect x="54" y="41" width="1" height="1" fill="#4a1410"/><rect x="55" y="41" width="1" height="1" fill="#33221a"/><rect x="56" y="41" width="1" height="1" fill="#2e3440"/><rect x="57" y="41" width="1" height="1" fill="#171717"/><rect x="43" y="42" width="2" height="1" fill="#a08060"/><rect x="45" y="42" width="1" height="1" fill="#10040a"/><rect x="46" y="42" width="1" height="1" fill="#080808"/><rect x="47" y="42" width="1" height="1" fill="#c4c4c4"/><rect x="48" y="42" width="1" height="1" fill="#a89080"/><rect x="49" y="42" width="1" height="1" fill="#f0c890"/><rect x="50" y="42" width="1" height="1" fill="#e2e2e2"/><rect x="51" y="42" width="1" height="1" fill="#d07838"/><rect x="52" y="42" width="1" height="1" fill="#6a5848"/><rect x="53" y="42" width="1" height="1" fill="#080808"/><rect x="54" y="42" width="1" height="1" fill="#33221a"/><rect x="55" y="42" width="2" height="1" fill="#080808"/><rect x="57" y="42" width="1" height="1" fill="#33221a"/><rect x="58" y="42" width="2" height="1" fill="#080808"/><rect x="43" y="43" width="2" height="1" fill="#a08060"/><rect x="45" y="43" width="1" height="1" fill="#a4a4a4"/><rect x="46" y="43" width="1" height="1" fill="#f8a850"/><rect x="47" y="43" width="1" height="1" fill="#c8dcec"/><rect x="48" y="43" width="1" height="1" fill="#ffe8b8"/><rect x="49" y="43" width="1" height="1" fill="#f0c890"/><rect x="50" y="43" width="1" height="1" fill="#f07020"/><rect x="51" y="43" width="1" height="1" fill="#a89080"/><rect x="52" y="43" width="1" height="1" fill="#d07838"/><rect x="53" y="43" width="1" height="1" fill="#080808"/><rect x="54" y="43" width="1" height="1" fill="#232323"/><rect x="55" y="43" width="1" height="1" fill="#080808"/><rect x="56" y="43" width="1" height="1" fill="#4c4c4c"/><rect x="57" y="43" width="1" height="1" fill="#171717"/><rect x="58" y="43" width="1" height="1" fill="#080808"/><rect x="59" y="43" width="1" height="1" fill="#171717"/><rect x="60" y="43" width="1" height="1" fill="#232323"/><rect x="43" y="44" width="2" height="1" fill="#a08060"/><rect x="45" y="44" width="1" height="1" fill="#33221a"/><rect x="46" y="44" width="1" height="1" fill="#f0c890"/><rect x="47" y="44" width="1" height="1" fill="#080808"/><rect x="48" y="44" width="1" height="1" fill="#c4c4c4"/><rect x="49" y="44" width="1" height="1" fill="#f8a850"/><rect x="50" y="44" width="1" height="1" fill="#d0a878"/><rect x="51" y="44" width="1" height="1" fill="#080808"/><rect x="52" y="44" width="1" height="1" fill="#232323"/><rect x="53" y="44" width="3" height="1" fill="#33221a"/><rect x="56" y="44" width="1" height="1" fill="#080808"/><rect x="57" y="44" width="1" height="1" fill="#33221a"/><rect x="58" y="44" width="2" height="1" fill="#080808"/><rect x="60" y="44" width="1" height="1" fill="#171717"/><rect x="43" y="45" width="2" height="1" fill="#a08060"/><rect x="45" y="45" width="1" height="1" fill="#080808"/><rect x="46" y="45" width="1" height="1" fill="#f0c890"/><rect x="47" y="45" width="1" height="1" fill="#171717"/><rect x="48" y="45" width="2" height="1" fill="#080808"/><rect x="50" y="45" width="1" height="1" fill="#a89080"/><rect x="51" y="45" width="1" height="1" fill="#080808"/><rect x="52" y="45" width="1" height="1" fill="#171717"/><rect x="53" y="45" width="1" height="1" fill="#080808"/><rect x="54" y="45" width="1" height="1" fill="#6e6e6e"/><rect x="55" y="45" width="1" height="1" fill="#33221a"/><rect x="56" y="45" width="1" height="1" fill="#171717"/><rect x="57" y="45" width="1" height="1" fill="#707c90"/><rect x="58" y="45" width="1" height="1" fill="#f8a850"/><rect x="59" y="45" width="2" height="1" fill="#080808"/><rect x="61" y="45" width="1" height="1" fill="#232323"/><rect x="40" y="46" width="2" height="1" fill="#232323"/><rect x="42" y="46" width="2" height="1" fill="#171717"/><rect x="44" y="46" width="1" height="1" fill="#fafafa"/><rect x="45" y="46" width="1" height="1" fill="#ffe8b8"/><rect x="46" y="46" width="1" height="1" fill="#f8d060"/><rect x="47" y="46" width="1" height="1" fill="#ffe8b8"/><rect x="48" y="46" width="1" height="1" fill="#a89080"/><rect x="49" y="46" width="1" height="1" fill="#2e3440"/><rect x="50" y="46" width="1" height="1" fill="#080808"/><rect x="51" y="46" width="1" height="1" fill="#33221a"/><rect x="52" y="46" width="2" height="1" fill="#171717"/><rect x="54" y="46" width="1" height="1" fill="#303030"/><rect x="55" y="46" width="1" height="1" fill="#080808"/><rect x="56" y="46" width="1" height="1" fill="#33221a"/><rect x="57" y="46" width="4" height="1" fill="#080808"/><rect x="61" y="46" width="1" height="1" fill="#232323"/><rect x="62" y="46" width="1" height="1" fill="#303030"/><rect x="40" y="47" width="1" height="1" fill="#303030"/><rect x="41" y="47" width="1" height="1" fill="#232323"/><rect x="42" y="47" width="1" height="1" fill="#303030"/><rect x="43" y="47" width="1" height="1" fill="#171717"/><rect x="44" y="47" width="1" height="1" fill="#ffe8b8"/><rect x="45" y="47" width="1" height="1" fill="#c8dcec"/><rect x="46" y="47" width="1" height="1" fill="#f8d060"/><rect x="47" y="47" width="1" height="1" fill="#f0d8c0"/><rect x="48" y="47" width="1" height="1" fill="#a89080"/><rect x="49" y="47" width="1" height="1" fill="#080808"/><rect x="50" y="47" width="1" height="1" fill="#d0a878"/><rect x="51" y="47" width="1" height="1" fill="#080808"/><rect x="52" y="47" width="1" height="1" fill="#232323"/><rect x="53" y="47" width="1" height="1" fill="#080808"/><rect x="54" y="47" width="1" height="1" fill="#171717"/><rect x="55" y="47" width="1" height="1" fill="#080808"/><rect x="56" y="47" width="1" height="1" fill="#604030"/><rect x="57" y="47" width="1" height="1" fill="#080808"/><rect x="58" y="47" width="1" height="1" fill="#303030"/><rect x="59" y="47" width="2" height="1" fill="#080808"/><rect x="61" y="47" width="1" height="1" fill="#171717"/><rect x="62" y="47" width="1" height="1" fill="#080808"/><rect x="39" y="48" width="1" height="1" fill="#6e6e6e"/><rect x="40" y="48" width="2" height="1" fill="#232323"/><rect x="42" y="48" width="1" height="1" fill="#171717"/><rect x="43" y="48" width="1" height="1" fill="#604030"/><rect x="44" y="48" width="3" height="1" fill="#171717"/><rect x="47" y="48" width="1" height="1" fill="#e2e2e2"/><rect x="48" y="48" width="1" height="1" fill="#171717"/><rect x="49" y="48" width="1" height="1" fill="#506070"/><rect x="50" y="48" width="1" height="1" fill="#080808"/><rect x="51" y="48" width="1" height="1" fill="#a4a4a4"/><rect x="52" y="48" width="1" height="1" fill="#604030"/><rect x="53" y="48" width="1" height="1" fill="#080808"/><rect x="54" y="48" width="1" height="1" fill="#33221a"/><rect x="55" y="48" width="1" height="1" fill="#3c4650"/><rect x="56" y="48" width="2" height="1" fill="#080808"/><rect x="58" y="48" width="1" height="1" fill="#a89080"/><rect x="59" y="48" width="4" height="1" fill="#080808"/><rect x="63" y="48" width="1" height="1" fill="#232323"/><rect x="64" y="48" width="1" height="1" fill="#171717"/><rect x="65" y="48" width="1" height="1" fill="#4c4c4c"/><rect x="37" y="49" width="1" height="1" fill="#e2e2e2"/><rect x="38" y="49" width="1" height="1" fill="#c4c4c4"/><rect x="39" y="49" width="1" height="1" fill="#4c4c4c"/><rect x="40" y="49" width="1" height="1" fill="#303030"/><rect x="41" y="49" width="1" height="1" fill="#171717"/><rect x="42" y="49" width="1" height="1" fill="#080808"/><rect x="43" y="49" width="1" height="1" fill="#f0c890"/><rect x="44" y="49" width="1" height="1" fill="#171717"/><rect x="45" y="49" width="1" height="1" fill="#5a3038"/><rect x="46" y="49" width="1" height="1" fill="#c4c4c4"/><rect x="47" y="49" width="1" height="1" fill="#ffe8b8"/><rect x="48" y="49" width="1" height="1" fill="#601010"/><rect x="49" y="49" width="1" height="1" fill="#f0d8c0"/><rect x="50" y="49" width="1" height="1" fill="#080808"/><rect x="51" y="49" width="1" height="1" fill="#6e6e6e"/><rect x="52" y="49" width="2" height="1" fill="#080808"/><rect x="54" y="49" width="1" height="1" fill="#171717"/><rect x="55" y="49" width="1" height="1" fill="#888888"/><rect x="56" y="49" width="1" height="1" fill="#33221a"/><rect x="57" y="49" width="1" height="1" fill="#303030"/><rect x="58" y="49" width="3" height="1" fill="#232323"/><rect x="61" y="49" width="1" height="1" fill="#171717"/><rect x="62" y="49" width="1" height="1" fill="#080808"/><rect x="63" y="49" width="1" height="1" fill="#6e6e6e"/><rect x="64" y="49" width="1" height="1" fill="#171717"/><rect x="65" y="49" width="2" height="1" fill="#080808"/><rect x="67" y="49" width="1" height="1" fill="#e2e2e2"/><rect x="36" y="50" width="2" height="1" fill="#303030"/><rect x="38" y="50" width="1" height="1" fill="#c4c4c4"/><rect x="39" y="50" width="2" height="1" fill="#171717"/><rect x="41" y="50" width="1" height="1" fill="#232323"/><rect x="42" y="50" width="2" height="1" fill="#080808"/><rect x="44" y="50" width="1" height="1" fill="#fafafa"/><rect x="45" y="50" width="1" height="1" fill="#c4c4c4"/><rect x="46" y="50" width="1" height="1" fill="#707858"/><rect x="47" y="50" width="1" height="1" fill="#a89080"/><rect x="48" y="50" width="1" height="1" fill="#f0d8c0"/><rect x="49" y="50" width="1" height="1" fill="#a89080"/><rect x="50" y="50" width="1" height="1" fill="#d0a878"/><rect x="51" y="50" width="1" height="1" fill="#a86040"/><rect x="52" y="50" width="1" height="1" fill="#303030"/><rect x="53" y="50" width="1" height="1" fill="#6a5848"/><rect x="54" y="50" width="1" height="1" fill="#d0a878"/><rect x="55" y="50" width="1" height="1" fill="#080808"/><rect x="56" y="50" width="1" height="1" fill="#303030"/><rect x="57" y="50" width="2" height="1" fill="#171717"/><rect x="59" y="50" width="2" height="1" fill="#080808"/><rect x="61" y="50" width="3" height="1" fill="#171717"/><rect x="64" y="50" width="1" height="1" fill="#080808"/><rect x="65" y="50" width="1" height="1" fill="#171717"/><rect x="66" y="50" width="1" height="1" fill="#232323"/><rect x="67" y="50" width="1" height="1" fill="#888888"/><rect x="68" y="50" width="2" height="1" fill="#232323"/><rect x="34" y="51" width="1" height="1" fill="#6e6e6e"/><rect x="35" y="51" width="1" height="1" fill="#232323"/><rect x="36" y="51" width="1" height="1" fill="#4c4c4c"/><rect x="37" y="51" width="1" height="1" fill="#6e6e6e"/><rect x="38" y="51" width="2" height="1" fill="#4c4c4c"/><rect x="40" y="51" width="1" height="1" fill="#171717"/><rect x="41" y="51" width="1" height="1" fill="#232323"/><rect x="42" y="51" width="1" height="1" fill="#080808"/><rect x="43" y="51" width="1" height="1" fill="#f0d8c0"/><rect x="44" y="51" width="1" height="1" fill="#fafafa"/><rect x="45" y="51" width="1" height="1" fill="#f07020"/><rect x="46" y="51" width="2" height="1" fill="#171717"/><rect x="48" y="51" width="1" height="1" fill="#080808"/><rect x="49" y="51" width="1" height="1" fill="#ffe8b8"/><rect x="50" y="51" width="1" height="1" fill="#d0a878"/><rect x="51" y="51" width="1" height="1" fill="#4a1410"/><rect x="52" y="51" width="1" height="1" fill="#080808"/><rect x="53" y="51" width="1" height="1" fill="#604030"/><rect x="54" y="51" width="1" height="1" fill="#a89080"/><rect x="55" y="51" width="1" height="1" fill="#a86040"/><rect x="56" y="51" width="1" height="1" fill="#3c4650"/><rect x="57" y="51" width="1" height="1" fill="#f0d8c0"/><rect x="58" y="51" width="1" height="1" fill="#33221a"/><rect x="59" y="51" width="2" height="1" fill="#080808"/><rect x="61" y="51" width="1" height="1" fill="#171717"/><rect x="62" y="51" width="1" height="1" fill="#232323"/><rect x="63" y="51" width="1" height="1" fill="#080808"/><rect x="64" y="51" width="1" height="1" fill="#232323"/><rect x="65" y="51" width="4" height="1" fill="#171717"/><rect x="69" y="51" width="1" height="1" fill="#303030"/><rect x="70" y="51" width="1" height="1" fill="#080808"/><rect x="33" y="52" width="1" height="1" fill="#303030"/><rect x="34" y="52" width="1" height="1" fill="#232323"/><rect x="35" y="52" width="1" height="1" fill="#6e6e6e"/><rect x="36" y="52" width="1" height="1" fill="#c4c4c4"/><rect x="37" y="52" width="1" height="1" fill="#232323"/><rect x="38" y="52" width="1" height="1" fill="#6e6e6e"/><rect x="39" y="52" width="2" height="1" fill="#303030"/><rect x="41" y="52" width="1" height="1" fill="#232323"/><rect x="42" y="52" width="1" height="1" fill="#080808"/><rect x="43" y="52" width="1" height="1" fill="#232323"/><rect x="44" y="52" width="1" height="1" fill="#171717"/><rect x="45" y="52" width="1" height="1" fill="#4a1410"/><rect x="46" y="52" width="1" height="1" fill="#a89080"/><rect x="47" y="52" width="1" height="1" fill="#b06858"/><rect x="48" y="52" width="1" height="1" fill="#c888b0"/><rect x="49" y="52" width="1" height="1" fill="#f0c890"/><rect x="50" y="52" width="1" height="1" fill="#f0d8c0"/><rect x="51" y="52" width="1" height="1" fill="#98aabc"/><rect x="52" y="52" width="1" height="1" fill="#080808"/><rect x="53" y="52" width="1" height="1" fill="#171717"/><rect x="54" y="52" width="1" height="1" fill="#a84868"/><rect x="55" y="52" width="1" height="1" fill="#171717"/><rect x="56" y="52" width="4" height="1" fill="#080808"/><rect x="60" y="52" width="1" height="1" fill="#171717"/><rect x="61" y="52" width="1" height="1" fill="#4c4c4c"/><rect x="62" y="52" width="4" height="1" fill="#171717"/><rect x="66" y="52" width="1" height="1" fill="#4c4c4c"/><rect x="67" y="52" width="1" height="1" fill="#171717"/><rect x="68" y="52" width="1" height="1" fill="#4c4c4c"/><rect x="69" y="52" width="1" height="1" fill="#171717"/><rect x="70" y="52" width="1" height="1" fill="#6e6e6e"/><rect x="71" y="52" width="1" height="1" fill="#171717"/><rect x="72" y="52" width="1" height="1" fill="#4c4c4c"/><rect x="73" y="52" width="1" height="1" fill="#303030"/><rect x="24" y="53" width="1" height="1" fill="#232323"/><rect x="25" y="53" width="1" height="1" fill="#303030"/><rect x="31" y="53" width="3" height="1" fill="#171717"/><rect x="34" y="53" width="1" height="1" fill="#080808"/><rect x="35" y="53" width="1" height="1" fill="#232323"/><rect x="36" y="53" width="1" height="1" fill="#080808"/><rect x="37" y="53" width="1" height="1" fill="#232323"/><rect x="38" y="53" width="1" height="1" fill="#6e6e6e"/><rect x="39" y="53" width="1" height="1" fill="#303030"/><rect x="40" y="53" width="1" height="1" fill="#33221a"/><rect x="41" y="53" width="1" height="1" fill="#171717"/><rect x="42" y="53" width="3" height="1" fill="#080808"/><rect x="45" y="53" width="1" height="1" fill="#f8a850"/><rect x="46" y="53" width="1" height="1" fill="#fafafa"/><rect x="47" y="53" width="1" height="1" fill="#33221a"/><rect x="48" y="53" width="1" height="1" fill="#d06070"/><rect x="49" y="53" width="1" height="1" fill="#e2e2e2"/><rect x="50" y="53" width="1" height="1" fill="#a4a4a4"/><rect x="51" y="53" width="1" height="1" fill="#33221a"/><rect x="52" y="53" width="2" height="1" fill="#080808"/><rect x="54" y="53" width="1" height="1" fill="#604030"/><rect x="55" y="53" width="1" height="1" fill="#d04818"/><rect x="56" y="53" width="2" height="1" fill="#080808"/><rect x="58" y="53" width="1" height="1" fill="#303030"/><rect x="59" y="53" width="2" height="1" fill="#232323"/><rect x="61" y="53" width="3" height="1" fill="#171717"/><rect x="64" y="53" width="1" height="1" fill="#080808"/><rect x="65" y="53" width="2" height="1" fill="#171717"/><rect x="67" y="53" width="1" height="1" fill="#303030"/><rect x="68" y="53" width="3" height="1" fill="#171717"/><rect x="71" y="53" width="1" height="1" fill="#080808"/><rect x="72" y="53" width="1" height="1" fill="#232323"/><rect x="73" y="53" width="1" height="1" fill="#171717"/><rect x="74" y="53" width="1" height="1" fill="#232323"/><rect x="75" y="53" width="1" height="1" fill="#171717"/><rect x="76" y="53" width="2" height="1" fill="#232323"/><rect x="24" y="54" width="1" height="1" fill="#303030"/><rect x="25" y="54" width="2" height="1" fill="#232323"/><rect x="27" y="54" width="1" height="1" fill="#171717"/><rect x="28" y="54" width="1" height="1" fill="#232323"/><rect x="29" y="54" width="3" height="1" fill="#171717"/><rect x="32" y="54" width="2" height="1" fill="#232323"/><rect x="34" y="54" width="1" height="1" fill="#a4a4a4"/><rect x="35" y="54" width="1" height="1" fill="#080808"/><rect x="36" y="54" width="1" height="1" fill="#888888"/><rect x="37" y="54" width="1" height="1" fill="#171717"/><rect x="38" y="54" width="1" height="1" fill="#a4a4a4"/><rect x="39" y="54" width="1" height="1" fill="#232323"/><rect x="40" y="54" width="1" height="1" fill="#171717"/><rect x="41" y="54" width="2" height="1" fill="#232323"/><rect x="43" y="54" width="1" height="1" fill="#171717"/><rect x="44" y="54" width="1" height="1" fill="#080808"/><rect x="45" y="54" width="1" height="1" fill="#604030"/><rect x="46" y="54" width="2" height="1" fill="#171717"/><rect x="48" y="54" width="1" height="1" fill="#4c4c4c"/><rect x="49" y="54" width="1" height="1" fill="#080808"/><rect x="50" y="54" width="1" height="1" fill="#e2e2e2"/><rect x="51" y="54" width="1" height="1" fill="#080808"/><rect x="52" y="54" width="1" height="1" fill="#a89080"/><rect x="53" y="54" width="1" height="1" fill="#c4c4c4"/><rect x="54" y="54" width="1" height="1" fill="#080808"/><rect x="55" y="54" width="1" height="1" fill="#4a1410"/><rect x="56" y="54" width="1" height="1" fill="#d04818"/><rect x="57" y="54" width="1" height="1" fill="#080808"/><rect x="58" y="54" width="1" height="1" fill="#604030"/><rect x="59" y="54" width="1" height="1" fill="#080808"/><rect x="60" y="54" width="2" height="1" fill="#232323"/><rect x="62" y="54" width="1" height="1" fill="#080808"/><rect x="63" y="54" width="2" height="1" fill="#171717"/><rect x="65" y="54" width="1" height="1" fill="#4c4c4c"/><rect x="66" y="54" width="1" height="1" fill="#080808"/><rect x="67" y="54" width="1" height="1" fill="#232323"/><rect x="68" y="54" width="1" height="1" fill="#171717"/><rect x="69" y="54" width="1" height="1" fill="#303030"/><rect x="70" y="54" width="1" height="1" fill="#171717"/><rect x="71" y="54" width="1" height="1" fill="#080808"/><rect x="72" y="54" width="2" height="1" fill="#171717"/><rect x="74" y="54" width="1" height="1" fill="#080808"/><rect x="75" y="54" width="2" height="1" fill="#171717"/><rect x="77" y="54" width="2" height="1" fill="#080808"/><rect x="23" y="55" width="1" height="1" fill="#303030"/><rect x="24" y="55" width="3" height="1" fill="#232323"/><rect x="27" y="55" width="1" height="1" fill="#171717"/><rect x="28" y="55" width="1" height="1" fill="#232323"/><rect x="29" y="55" width="3" height="1" fill="#171717"/><rect x="32" y="55" width="2" height="1" fill="#232323"/><rect x="34" y="55" width="1" height="1" fill="#171717"/><rect x="35" y="55" width="1" height="1" fill="#6e6e6e"/><rect x="36" y="55" width="2" height="1" fill="#171717"/><rect x="38" y="55" width="1" height="1" fill="#6e6e6e"/><rect x="39" y="55" width="3" height="1" fill="#171717"/><rect x="42" y="55" width="1" height="1" fill="#080808"/><rect x="43" y="55" width="1" height="1" fill="#171717"/><rect x="44" y="55" width="1" height="1" fill="#f0c890"/><rect x="45" y="55" width="1" height="1" fill="#171717"/><rect x="46" y="55" width="1" height="1" fill="#2e3440"/><rect x="47" y="55" width="1" height="1" fill="#888888"/><rect x="48" y="55" width="1" height="1" fill="#a4a4a4"/><rect x="49" y="55" width="1" height="1" fill="#080808"/><rect x="50" y="55" width="1" height="1" fill="#f8a850"/><rect x="51" y="55" width="1" height="1" fill="#c4c4c4"/><rect x="52" y="55" width="2" height="1" fill="#080808"/><rect x="54" y="55" width="1" height="1" fill="#171717"/><rect x="55" y="55" width="2" height="1" fill="#888888"/><rect x="57" y="55" width="2" height="1" fill="#080808"/><rect x="59" y="55" width="1" height="1" fill="#303030"/><rect x="60" y="55" width="2" height="1" fill="#232323"/><rect x="62" y="55" width="1" height="1" fill="#171717"/><rect x="63" y="55" width="1" height="1" fill="#232323"/><rect x="64" y="55" width="4" height="1" fill="#080808"/><rect x="68" y="55" width="1" height="1" fill="#171717"/><rect x="69" y="55" width="1" height="1" fill="#303030"/><rect x="70" y="55" width="1" height="1" fill="#080808"/><rect x="71" y="55" width="1" height="1" fill="#171717"/><rect x="72" y="55" width="1" height="1" fill="#232323"/><rect x="73" y="55" width="4" height="1" fill="#171717"/><rect x="77" y="55" width="1" height="1" fill="#303030"/><rect x="78" y="55" width="1" height="1" fill="#080808"/><rect x="22" y="56" width="1" height="1" fill="#080808"/><rect x="23" y="56" width="3" height="1" fill="#232323"/><rect x="26" y="56" width="1" height="1" fill="#171717"/><rect x="27" y="56" width="2" height="1" fill="#232323"/><rect x="29" y="56" width="2" height="1" fill="#171717"/><rect x="31" y="56" width="3" height="1" fill="#232323"/><rect x="34" y="56" width="2" height="1" fill="#303030"/><rect x="36" y="56" width="1" height="1" fill="#171717"/><rect x="37" y="56" width="1" height="1" fill="#4c4c4c"/><rect x="38" y="56" width="1" height="1" fill="#232323"/><rect x="39" y="56" width="2" height="1" fill="#171717"/><rect x="41" y="56" width="1" height="1" fill="#232323"/><rect x="42" y="56" width="1" height="1" fill="#171717"/><rect x="43" y="56" width="3" height="1" fill="#080808"/><rect x="46" y="56" width="1" height="1" fill="#a86040"/><rect x="47" y="56" width="1" height="1" fill="#f0d8c0"/><rect x="48" y="56" width="1" height="1" fill="#080808"/><rect x="49" y="56" width="1" height="1" fill="#888888"/><rect x="50" y="56" width="1" height="1" fill="#5a3038"/><rect x="51" y="56" width="1" height="1" fill="#080808"/><rect x="52" y="56" width="1" height="1" fill="#a89080"/><rect x="53" y="56" width="1" height="1" fill="#604030"/><rect x="54" y="56" width="1" height="1" fill="#f07020"/><rect x="55" y="56" width="1" height="1" fill="#506070"/><rect x="56" y="56" width="1" height="1" fill="#d0a878"/><rect x="57" y="56" width="1" height="1" fill="#080808"/><rect x="58" y="56" width="1" height="1" fill="#232323"/><rect x="59" y="56" width="1" height="1" fill="#171717"/><rect x="60" y="56" width="1" height="1" fill="#303030"/><rect x="61" y="56" width="1" height="1" fill="#232323"/><rect x="62" y="56" width="2" height="1" fill="#171717"/><rect x="64" y="56" width="1" height="1" fill="#232323"/><rect x="65" y="56" width="3" height="1" fill="#080808"/><rect x="68" y="56" width="5" height="1" fill="#171717"/><rect x="73" y="56" width="1" height="1" fill="#232323"/><rect x="74" y="56" width="1" height="1" fill="#303030"/><rect x="75" y="56" width="2" height="1" fill="#171717"/><rect x="77" y="56" width="1" height="1" fill="#232323"/><rect x="78" y="56" width="1" height="1" fill="#303030"/><rect x="79" y="56" width="1" height="1" fill="#171717"/><rect x="80" y="56" width="1" height="1" fill="#4c4c4c"/><rect x="21" y="57" width="1" height="1" fill="#232323"/><rect x="22" y="57" width="1" height="1" fill="#171717"/><rect x="23" y="57" width="1" height="1" fill="#080808"/><rect x="24" y="57" width="1" height="1" fill="#232323"/><rect x="25" y="57" width="2" height="1" fill="#171717"/><rect x="27" y="57" width="1" height="1" fill="#232323"/><rect x="28" y="57" width="3" height="1" fill="#303030"/><rect x="31" y="57" width="2" height="1" fill="#232323"/><rect x="33" y="57" width="1" height="1" fill="#171717"/><rect x="34" y="57" width="1" height="1" fill="#232323"/><rect x="35" y="57" width="2" height="1" fill="#171717"/><rect x="37" y="57" width="1" height="1" fill="#4c4c4c"/><rect x="38" y="57" width="1" height="1" fill="#888888"/><rect x="39" y="57" width="1" height="1" fill="#303030"/><rect x="40" y="57" width="2" height="1" fill="#232323"/><rect x="42" y="57" width="2" height="1" fill="#171717"/><rect x="44" y="57" width="1" height="1" fill="#080808"/><rect x="45" y="57" width="1" height="1" fill="#232323"/><rect x="46" y="57" width="1" height="1" fill="#c8dcec"/><rect x="47" y="57" width="2" height="1" fill="#ffe8b8"/><rect x="49" y="57" width="1" height="1" fill="#c03828"/><rect x="50" y="57" width="1" height="1" fill="#7a2412"/><rect x="51" y="57" width="1" height="1" fill="#b06858"/><rect x="52" y="57" width="1" height="1" fill="#d0a878"/><rect x="53" y="57" width="2" height="1" fill="#33221a"/><rect x="55" y="57" width="1" height="1" fill="#6a5848"/><rect x="56" y="57" width="1" height="1" fill="#a86040"/><rect x="57" y="57" width="1" height="1" fill="#2e3440"/><rect x="58" y="57" width="1" height="1" fill="#303030"/><rect x="59" y="57" width="1" height="1" fill="#080808"/><rect x="60" y="57" width="1" height="1" fill="#232323"/><rect x="61" y="57" width="1" height="1" fill="#4c4c4c"/><rect x="62" y="57" width="2" height="1" fill="#232323"/><rect x="64" y="57" width="1" height="1" fill="#171717"/><rect x="65" y="57" width="1" height="1" fill="#3c4650"/><rect x="66" y="57" width="1" height="1" fill="#232323"/><rect x="67" y="57" width="2" height="1" fill="#171717"/><rect x="69" y="57" width="1" height="1" fill="#232323"/><rect x="70" y="57" width="1" height="1" fill="#171717"/><rect x="71" y="57" width="3" height="1" fill="#080808"/><rect x="74" y="57" width="3" height="1" fill="#171717"/><rect x="77" y="57" width="1" height="1" fill="#080808"/><rect x="78" y="57" width="2" height="1" fill="#232323"/><rect x="80" y="57" width="1" height="1" fill="#a4a4a4"/><rect x="20" y="58" width="1" height="1" fill="#4c4c4c"/><rect x="21" y="58" width="2" height="1" fill="#303030"/><rect x="23" y="58" width="1" height="1" fill="#232323"/><rect x="24" y="58" width="1" height="1" fill="#080808"/><rect x="25" y="58" width="2" height="1" fill="#232323"/><rect x="27" y="58" width="1" height="1" fill="#171717"/><rect x="28" y="58" width="1" height="1" fill="#232323"/><rect x="29" y="58" width="1" height="1" fill="#303030"/><rect x="30" y="58" width="1" height="1" fill="#232323"/><rect x="31" y="58" width="1" height="1" fill="#080808"/><rect x="32" y="58" width="2" height="1" fill="#232323"/><rect x="34" y="58" width="1" height="1" fill="#a4a4a4"/><rect x="35" y="58" width="1" height="1" fill="#080808"/><rect x="36" y="58" width="4" height="1" fill="#171717"/><rect x="40" y="58" width="1" height="1" fill="#232323"/><rect x="41" y="58" width="2" height="1" fill="#171717"/><rect x="43" y="58" width="1" height="1" fill="#080808"/><rect x="44" y="58" width="1" height="1" fill="#171717"/><rect x="45" y="58" width="1" height="1" fill="#33221a"/><rect x="46" y="58" width="1" height="1" fill="#f0c890"/><rect x="47" y="58" width="1" height="1" fill="#33221a"/><rect x="48" y="58" width="1" height="1" fill="#601010"/><rect x="49" y="58" width="1" height="1" fill="#e2e2e2"/><rect x="50" y="58" width="1" height="1" fill="#33221a"/><rect x="51" y="58" width="1" height="1" fill="#303030"/><rect x="52" y="58" width="1" height="1" fill="#fafafa"/><rect x="53" y="58" width="1" height="1" fill="#ffe8b8"/><rect x="54" y="58" width="1" height="1" fill="#a86040"/><rect x="55" y="58" width="1" height="1" fill="#d0a878"/><rect x="56" y="58" width="2" height="1" fill="#171717"/><rect x="58" y="58" width="1" height="1" fill="#080808"/><rect x="59" y="58" width="3" height="1" fill="#232323"/><rect x="62" y="58" width="2" height="1" fill="#171717"/><rect x="64" y="58" width="3" height="1" fill="#232323"/><rect x="67" y="58" width="4" height="1" fill="#171717"/><rect x="71" y="58" width="1" height="1" fill="#080808"/><rect x="72" y="58" width="1" height="1" fill="#171717"/><rect x="73" y="58" width="1" height="1" fill="#232323"/><rect x="74" y="58" width="1" height="1" fill="#303030"/><rect x="75" y="58" width="5" height="1" fill="#171717"/><rect x="80" y="58" width="1" height="1" fill="#080808"/><rect x="18" y="59" width="1" height="1" fill="#171717"/><rect x="19" y="59" width="1" height="1" fill="#6e6e6e"/><rect x="20" y="59" width="1" height="1" fill="#303030"/><rect x="21" y="59" width="1" height="1" fill="#232323"/><rect x="22" y="59" width="1" height="1" fill="#4c4c4c"/><rect x="23" y="59" width="1" height="1" fill="#303030"/><rect x="24" y="59" width="1" height="1" fill="#4c4c4c"/><rect x="25" y="59" width="2" height="1" fill="#232323"/><rect x="27" y="59" width="1" height="1" fill="#33221a"/><rect x="28" y="59" width="1" height="1" fill="#232323"/><rect x="29" y="59" width="1" height="1" fill="#080808"/><rect x="30" y="59" width="1" height="1" fill="#232323"/><rect x="31" y="59" width="1" height="1" fill="#171717"/><rect x="32" y="59" width="1" height="1" fill="#303030"/><rect x="33" y="59" width="2" height="1" fill="#171717"/><rect x="35" y="59" width="1" height="1" fill="#303030"/><rect x="36" y="59" width="1" height="1" fill="#080808"/><rect x="37" y="59" width="1" height="1" fill="#232323"/><rect x="38" y="59" width="2" height="1" fill="#080808"/><rect x="40" y="59" width="3" height="1" fill="#171717"/><rect x="43" y="59" width="1" height="1" fill="#232323"/><rect x="44" y="59" width="1" height="1" fill="#080808"/><rect x="45" y="59" width="1" height="1" fill="#6a5848"/><rect x="46" y="59" width="1" height="1" fill="#171717"/><rect x="47" y="59" width="1" height="1" fill="#a89080"/><rect x="48" y="59" width="1" height="1" fill="#2e3440"/><rect x="49" y="59" width="1" height="1" fill="#080808"/><rect x="50" y="59" width="1" height="1" fill="#604030"/><rect x="51" y="59" width="1" height="1" fill="#080808"/><rect x="52" y="59" width="1" height="1" fill="#f0d8c0"/><rect x="53" y="59" width="1" height="1" fill="#ffe8b8"/><rect x="54" y="59" width="1" height="1" fill="#33221a"/><rect x="55" y="59" width="1" height="1" fill="#5878a0"/><rect x="56" y="59" width="1" height="1" fill="#a86040"/><rect x="57" y="59" width="1" height="1" fill="#604030"/><rect x="58" y="59" width="1" height="1" fill="#6a5848"/><rect x="59" y="59" width="1" height="1" fill="#3c4650"/><rect x="60" y="59" width="3" height="1" fill="#232323"/><rect x="63" y="59" width="1" height="1" fill="#171717"/><rect x="64" y="59" width="1" height="1" fill="#080808"/><rect x="65" y="59" width="1" height="1" fill="#3c4650"/><rect x="66" y="59" width="1" height="1" fill="#171717"/><rect x="67" y="59" width="2" height="1" fill="#080808"/><rect x="69" y="59" width="1" height="1" fill="#171717"/><rect x="70" y="59" width="1" height="1" fill="#232323"/><rect x="71" y="59" width="1" height="1" fill="#888888"/><rect x="72" y="59" width="1" height="1" fill="#171717"/><rect x="73" y="59" width="1" height="1" fill="#232323"/><rect x="74" y="59" width="1" height="1" fill="#171717"/><rect x="75" y="59" width="2" height="1" fill="#303030"/><rect x="77" y="59" width="1" height="1" fill="#171717"/><rect x="78" y="59" width="1" height="1" fill="#080808"/><rect x="79" y="59" width="1" height="1" fill="#232323"/><rect x="80" y="59" width="1" height="1" fill="#080808"/><rect x="81" y="59" width="1" height="1" fill="#303030"/><rect x="17" y="60" width="1" height="1" fill="#e2e2e2"/><rect x="18" y="60" width="1" height="1" fill="#080808"/><rect x="19" y="60" width="3" height="1" fill="#232323"/><rect x="22" y="60" width="1" height="1" fill="#4c4c4c"/><rect x="23" y="60" width="1" height="1" fill="#303030"/><rect x="24" y="60" width="1" height="1" fill="#4c4c4c"/><rect x="25" y="60" width="2" height="1" fill="#171717"/><rect x="27" y="60" width="1" height="1" fill="#232323"/><rect x="28" y="60" width="1" height="1" fill="#171717"/><rect x="29" y="60" width="3" height="1" fill="#232323"/><rect x="32" y="60" width="2" height="1" fill="#303030"/><rect x="34" y="60" width="1" height="1" fill="#171717"/><rect x="35" y="60" width="2" height="1" fill="#232323"/><rect x="37" y="60" width="1" height="1" fill="#6e6e6e"/><rect x="38" y="60" width="5" height="1" fill="#171717"/><rect x="43" y="60" width="2" height="1" fill="#080808"/><rect x="45" y="60" width="1" height="1" fill="#6e6e6e"/><rect x="46" y="60" width="1" height="1" fill="#5a3038"/><rect x="47" y="60" width="1" height="1" fill="#905860"/><rect x="48" y="60" width="1" height="1" fill="#171717"/><rect x="49" y="60" width="1" height="1" fill="#506070"/><rect x="50" y="60" width="1" height="1" fill="#d04818"/><rect x="51" y="60" width="2" height="1" fill="#604030"/><rect x="53" y="60" width="1" height="1" fill="#e2e2e2"/><rect x="54" y="60" width="1" height="1" fill="#33221a"/><rect x="55" y="60" width="1" height="1" fill="#080808"/><rect x="56" y="60" width="1" height="1" fill="#33221a"/><rect x="57" y="60" width="2" height="1" fill="#080808"/><rect x="59" y="60" width="1" height="1" fill="#303030"/><rect x="60" y="60" width="3" height="1" fill="#232323"/><rect x="63" y="60" width="1" height="1" fill="#303030"/><rect x="64" y="60" width="1" height="1" fill="#171717"/><rect x="65" y="60" width="1" height="1" fill="#232323"/><rect x="66" y="60" width="2" height="1" fill="#171717"/><rect x="68" y="60" width="1" height="1" fill="#232323"/><rect x="69" y="60" width="1" height="1" fill="#171717"/><rect x="70" y="60" width="1" height="1" fill="#232323"/><rect x="71" y="60" width="2" height="1" fill="#707c90"/><rect x="73" y="60" width="1" height="1" fill="#232323"/><rect x="74" y="60" width="1" height="1" fill="#171717"/><rect x="75" y="60" width="1" height="1" fill="#4c4c4c"/><rect x="76" y="60" width="3" height="1" fill="#171717"/><rect x="79" y="60" width="1" height="1" fill="#232323"/><rect x="80" y="60" width="1" height="1" fill="#080808"/><rect x="81" y="60" width="1" height="1" fill="#c4c4c4"/><rect x="17" y="61" width="1" height="1" fill="#303030"/><rect x="18" y="61" width="3" height="1" fill="#232323"/><rect x="21" y="61" width="1" height="1" fill="#6e6e6e"/><rect x="22" y="61" width="2" height="1" fill="#4c4c4c"/><rect x="24" y="61" width="1" height="1" fill="#080808"/><rect x="25" y="61" width="1" height="1" fill="#303030"/><rect x="26" y="61" width="1" height="1" fill="#232323"/><rect x="27" y="61" width="1" height="1" fill="#171717"/><rect x="28" y="61" width="1" height="1" fill="#232323"/><rect x="29" y="61" width="1" height="1" fill="#171717"/><rect x="30" y="61" width="1" height="1" fill="#303030"/><rect x="31" y="61" width="1" height="1" fill="#4c4c4c"/><rect x="32" y="61" width="1" height="1" fill="#303030"/><rect x="33" y="61" width="1" height="1" fill="#232323"/><rect x="34" y="61" width="2" height="1" fill="#171717"/><rect x="36" y="61" width="4" height="1" fill="#232323"/><rect x="40" y="61" width="1" height="1" fill="#171717"/><rect x="41" y="61" width="1" height="1" fill="#232323"/><rect x="42" y="61" width="1" height="1" fill="#171717"/><rect x="43" y="61" width="1" height="1" fill="#080808"/><rect x="44" y="61" width="1" height="1" fill="#171717"/><rect x="45" y="61" width="1" height="1" fill="#33221a"/><rect x="46" y="61" width="1" height="1" fill="#080808"/><rect x="47" y="61" width="1" height="1" fill="#303030"/><rect x="48" y="61" width="1" height="1" fill="#a89080"/><rect x="49" y="61" width="1" height="1" fill="#33221a"/><rect x="50" y="61" width="1" height="1" fill="#5878a0"/><rect x="51" y="61" width="1" height="1" fill="#ffe8b8"/><rect x="52" y="61" width="1" height="1" fill="#5a3038"/><rect x="53" y="61" width="1" height="1" fill="#604030"/><rect x="54" y="61" width="1" height="1" fill="#686c98"/><rect x="55" y="61" width="1" height="1" fill="#f0d8c0"/><rect x="56" y="61" width="1" height="1" fill="#4c4c4c"/><rect x="57" y="61" width="1" height="1" fill="#f8a850"/><rect x="58" y="61" width="1" height="1" fill="#080808"/><rect x="59" y="61" width="1" height="1" fill="#98aabc"/><rect x="60" y="61" width="1" height="1" fill="#171717"/><rect x="61" y="61" width="1" height="1" fill="#232323"/><rect x="62" y="61" width="2" height="1" fill="#171717"/><rect x="64" y="61" width="1" height="1" fill="#232323"/><rect x="65" y="61" width="2" height="1" fill="#080808"/><rect x="67" y="61" width="1" height="1" fill="#232323"/><rect x="68" y="61" width="3" height="1" fill="#080808"/><rect x="71" y="61" width="1" height="1" fill="#4c4c4c"/><rect x="72" y="61" width="1" height="1" fill="#232323"/><rect x="73" y="61" width="1" height="1" fill="#171717"/><rect x="74" y="61" width="1" height="1" fill="#4c4c4c"/><rect x="75" y="61" width="1" height="1" fill="#080808"/><rect x="76" y="61" width="4" height="1" fill="#171717"/><rect x="80" y="61" width="1" height="1" fill="#080808"/><rect x="81" y="61" width="1" height="1" fill="#4c4c4c"/><rect x="15" y="62" width="1" height="1" fill="#fafafa"/><rect x="16" y="62" width="1" height="1" fill="#171717"/><rect x="17" y="62" width="1" height="1" fill="#080808"/><rect x="18" y="62" width="1" height="1" fill="#303030"/><rect x="19" y="62" width="1" height="1" fill="#232323"/><rect x="20" y="62" width="1" height="1" fill="#171717"/><rect x="21" y="62" width="2" height="1" fill="#6e6e6e"/><rect x="23" y="62" width="1" height="1" fill="#4c4c4c"/><rect x="24" y="62" width="1" height="1" fill="#171717"/><rect x="25" y="62" width="1" height="1" fill="#303030"/><rect x="26" y="62" width="1" height="1" fill="#171717"/><rect x="27" y="62" width="2" height="1" fill="#232323"/><rect x="29" y="62" width="1" height="1" fill="#888888"/><rect x="30" y="62" width="1" height="1" fill="#232323"/><rect x="31" y="62" width="1" height="1" fill="#080808"/><rect x="32" y="62" width="2" height="1" fill="#303030"/><rect x="34" y="62" width="1" height="1" fill="#888888"/><rect x="35" y="62" width="5" height="1" fill="#232323"/><rect x="40" y="62" width="1" height="1" fill="#303030"/><rect x="41" y="62" width="1" height="1" fill="#171717"/><rect x="42" y="62" width="1" height="1" fill="#232323"/><rect x="43" y="62" width="1" height="1" fill="#080808"/><rect x="44" y="62" width="1" height="1" fill="#604030"/><rect x="45" y="62" width="1" height="1" fill="#080808"/><rect x="46" y="62" width="1" height="1" fill="#303030"/><rect x="47" y="62" width="1" height="1" fill="#2e3440"/><rect x="48" y="62" width="1" height="1" fill="#707858"/><rect x="49" y="62" width="1" height="1" fill="#d0a878"/><rect x="50" y="62" width="1" height="1" fill="#a89080"/><rect x="51" y="62" width="1" height="1" fill="#f0d8c0"/><rect x="52" y="62" width="1" height="1" fill="#f8a850"/><rect x="53" y="62" width="1" height="1" fill="#a86040"/><rect x="54" y="62" width="1" height="1" fill="#3c4650"/><rect x="55" y="62" width="1" height="1" fill="#d07838"/><rect x="56" y="62" width="2" height="1" fill="#171717"/><rect x="58" y="62" width="1" height="1" fill="#a89080"/><rect x="59" y="62" width="1" height="1" fill="#303030"/><rect x="60" y="62" width="1" height="1" fill="#232323"/><rect x="61" y="62" width="1" height="1" fill="#303030"/><rect x="62" y="62" width="1" height="1" fill="#171717"/><rect x="63" y="62" width="1" height="1" fill="#232323"/><rect x="64" y="62" width="3" height="1" fill="#080808"/><rect x="67" y="62" width="1" height="1" fill="#303030"/><rect x="68" y="62" width="3" height="1" fill="#171717"/><rect x="71" y="62" width="3" height="1" fill="#232323"/><rect x="74" y="62" width="2" height="1" fill="#080808"/><rect x="76" y="62" width="1" height="1" fill="#171717"/><rect x="77" y="62" width="1" height="1" fill="#080808"/><rect x="78" y="62" width="1" height="1" fill="#232323"/><rect x="79" y="62" width="1" height="1" fill="#171717"/><rect x="80" y="62" width="1" height="1" fill="#080808"/><rect x="81" y="62" width="1" height="1" fill="#171717"/></svg></div><!--img--></div>
 <div id="sb"><div id="stext">Rendering image (pass 1): done [00:00:00,3]</div></div>
 <div id="tip">
  <div id="tiptext">Refresh interactive rendering</div>
 </div>
 <svg class="abs" style="left:634px;top:69px" width="12" height="8"><path d="M0 8 L6 0 L12 8 Z" fill="#6e6e6e"/></svg>
</div>

<svg class="abs" style="left:0;top:0" width="716" height="62" viewBox="0 0 716 62">
 <defs>
  <radialGradient id="gball" cx="0.4" cy="0.3" r="0.75"><stop offset="0" stop-color="#e0e0e0"/><stop offset="0.6" stop-color="#9a9a9a"/><stop offset="1" stop-color="#5a5a5a"/></radialGradient>
  <radialGradient id="gx" cx="0.4" cy="0.3" r="0.8"><stop offset="0" stop-color="#9a9a9a"/><stop offset="1" stop-color="#5e5e5e"/></radialGradient>
  <linearGradient id="glens" x1="0" y1="0" x2="0" y2="1"><stop offset="0" stop-color="#3a5878"/><stop offset="1" stop-color="#0e1626"/></linearGradient>
  <radialGradient id="gstop" cx="0.5" cy="0.35" r="0.7"><stop offset="0" stop-color="#e04848"/><stop offset="1" stop-color="#a02020"/></radialGradient>
 </defs>
 <!-- rgb circles -->
 <g stroke="#2a2a2a" stroke-width="1">
  <circle cx="162.3" cy="43.8" r="4.4" fill="none"/>
  <circle cx="170" cy="43.8" r="4.4" fill="none"/>
  <circle cx="166" cy="50" r="4.4" fill="none"/>
 </g>
 <circle cx="162.3" cy="43.8" r="4.4" fill="#f08080"/>
 <circle cx="170" cy="43.8" r="4.4" fill="#70b070"/>
 <circle cx="166" cy="50" r="4.4" fill="#8888cc"/>
 <path d="M166.15 40.4 A4.4 4.4 0 0 1 166.15 47.2 A4.4 4.4 0 0 1 166.15 40.4 Z" fill="#e8e070"/>
 <path d="M162.2 48.2 A4.4 4.4 0 0 0 166.2 47.2 A4.4 4.4 0 0 0 162.2 48.2 Z" fill="#f0a0f0"/>
 <path d="M162.6 48.1 Q164.5 47.9 166.15 47.2 Q166.3 46 166.6 45.7 Q164 45.6 162.6 48.1 Z" fill="#e890d8" opacity="0.9"/>
 <path d="M169.6 48.1 Q167.8 47.9 166.15 47.2 Q166 46 165.7 45.7 Q168.3 45.6 169.6 48.1 Z" fill="#70d8e0" opacity="0.9"/>
 <!-- R G B buttons -->
 <g fill="#5b8ac6">
  <path d="M187 34 H205 L208 37 V55 L205 58 H187 L184 55 V37 Z"/>
  <path d="M217 34 H235 L238 37 V55 L235 58 H217 L214 55 V37 Z"/>
  <path d="M247 34 H265 L268 37 V55 L265 58 H247 L244 55 V37 Z"/>
 </g>
 <g font-family="Liberation Sans, sans-serif" font-size="13.2" font-weight="bold" text-anchor="middle" stroke="#34405a" stroke-width="1" paint-order="stroke" stroke-linejoin="round">
  <text x="197" y="52.4" fill="#f07474" textLength="7.6" lengthAdjust="spacingAndGlyphs">R</text>
  <text x="226.5" y="52.4" fill="#a8c474" textLength="8" lengthAdjust="spacingAndGlyphs">G</text>
  <text x="256.5" y="52.4" fill="#d0e0f2" textLength="7.6" lengthAdjust="spacingAndGlyphs">B</text>
 </g>
 <!-- white & gray balls -->
 <circle cx="286" cy="46.5" r="7" fill="#fcfcfc"/>
 <circle cx="316.3" cy="46.5" r="7" fill="url(#gball)"/>
 <!-- save -->
 <path d="M339 39 H351 L353.5 41.5 V53 H339 Z" fill="#8a9cba" stroke="#c8d4e4" stroke-width="0.7"/>
 <rect x="341" y="39.5" width="9.5" height="5" fill="#f4f6f8"/>
 <rect x="343" y="40.5" width="1.4" height="3" fill="#5a6a8a"/>
 <rect x="342" y="48.5" width="8.5" height="3.5" fill="#3a5080"/>
 <path d="M359.5 51.5 V59 H352 Z" fill="#c4c4c4"/>
 <!-- folder -->
 <path d="M368 41 H373 L374.5 42.5 H381 V45 H368 Z" fill="#f0c890" stroke="#d89050" stroke-width="1.1"/>
 <path d="M368 52 L370 45 H384.5 L382 52 Z" fill="#f2c88c" stroke="#d89050" stroke-width="1.1"/>
 <!-- clipboard -->
 <rect x="400.2" y="41" width="12" height="13" fill="#faf2e6" stroke="#d08a50" stroke-width="1.2"/>
 <path d="M404 41.5 H408.5 V39.5 A2 2 0 0 0 404 39.5 Z" fill="#8aa0c0"/>
 <path d="M402.5 45 H410 M402.5 47.3 H410 M402.5 49.6 H410 M402.5 51.9 H408" stroke="#9aa8b8" stroke-width="0.9"/>
 <!-- gray X -->
 <circle cx="435.8" cy="45.8" r="7.2" fill="url(#gx)"/>
 <path d="M432.8 42.8 L438.8 48.8 M438.8 42.8 L432.8 48.8" stroke="#b8b8b8" stroke-width="1.6"/>
 <!-- region icon -->
 <rect x="458" y="39" width="11.5" height="10" fill="#8aa0c2" stroke="#d4deec" stroke-width="0.9"/>
 <rect x="464" y="44.8" width="10.2" height="8" fill="#6a82ac" stroke="#a8b8d4" stroke-width="0.6"/>
 <path d="M462 42 L470 50 M470 46 V50 H466" stroke="#fff" stroke-width="1.3" fill="none"/>
 <!-- crosshair -->
 <g fill="#c88a68" stroke="#fff3ea" stroke-width="0.8">
  <rect x="493.2" y="37.6" width="3.6" height="3.6"/>
  <rect x="487.2" y="43.6" width="3.6" height="3.6"/>
  <rect x="499.2" y="43.6" width="3.6" height="3.6"/>
  <rect x="493.2" y="49.6" width="3.6" height="3.6"/>
 </g>
 <rect x="493.2" y="43.6" width="3.6" height="3.6" fill="#7a2a0a" stroke="#fff3ea" stroke-width="0.8"/>
 <path d="M496.5 46 L503 52.5 M496.5 46 V50 M496.5 46 H500.5" stroke="#fff" stroke-width="1.2" fill="none"/>
 <!-- teapot 1 -->
 <radialGradient id="gtea" cx="0.35" cy="0.35" r="0.8"><stop offset="0" stop-color="#d8ecfa"/><stop offset="1" stop-color="#7aa8d0"/></radialGradient>
 <path d="M516.8 42.6 Q518.5 43.2 520.5 46.5 L521.5 48.5 Q519 47.5 516.8 42.6 Z" fill="#9cc4e4"/>
 <ellipse cx="525.7" cy="45.6" rx="4.9" ry="4.6" fill="url(#gtea)"/>
 <circle cx="525.8" cy="40.4" r="1" fill="#a8cce8"/>
 <circle cx="531.6" cy="45.3" r="2.1" fill="none" stroke="#a0c4e0" stroke-width="0.9"/>
 <rect x="526.4" y="48.6" width="7.4" height="3.6" fill="#2a2a2a" stroke="#e05a20" stroke-width="1"/>
 <!-- lens -->
 <rect x="547.5" y="38.5" width="17" height="15" fill="url(#glens)" stroke="#8cc0ec" stroke-width="1"/>
 <path d="M550 46 L552.7 43 V49 Z M561.5 43 L564 46 L561.5 49 Z" fill="#b0dcf8"/>
 <path d="M551.6 46 L552.4 45 V47 Z" fill="#1a2a40"/>
 <path d="M555 43 V49 M557.5 43 V49 M560 43 V49" stroke="#b0dcf8" stroke-width="1.1"/>
 <!-- 50% -->
 <rect x="576" y="38" width="16.5" height="16" fill="#a2a2a2"/>
 <text x="584.3" y="49.8" font-family="Liberation Sans, sans-serif" font-size="8.6" fill="#646464" text-anchor="middle" textLength="14.5" lengthAdjust="spacingAndGlyphs">50%</text>
 <path d="M589 40 H591 V42 M578 50 V52.5 H580" stroke="#6c6c6c" stroke-width="0.6" fill="none"/>
 <path d="M597 51.5 V59 H590 Z" fill="#c4c4c4"/>
 <!-- region render -->
 <path d="M608 40 L621.5 38 L624.5 51 L611 53.5 Z" fill="#2e66b8"/>
 <rect x="611" y="41.5" width="10" height="9.5" fill="#e8a070" stroke="#e06a20" stroke-width="1.2"/>
 <path d="M616 46 L622 52 M616 46 V49.5 M616 46 H619.5" stroke="#fff" stroke-width="1.1" fill="none"/>
 <path d="M625 55.5 V58 H622.5 Z" fill="#c4c4c4"/>
 <!-- refresh button -->
 <rect x="628" y="34" width="24" height="23.6" rx="3" fill="#383838"/>
 <path d="M634.2 44.5 A6 6 0 0 1 645 42" fill="none" stroke="#22dd22" stroke-width="2"/>
 <path d="M645.8 47.5 A6 6 0 0 1 635 50" fill="none" stroke="#22dd22" stroke-width="2"/>
 <path d="M643 40 L647.5 39.5 L646.5 44 Z" fill="#22dd22"/>
 <path d="M637 52 L632.5 52.5 L633.5 48 Z" fill="#22dd22"/>
 <!-- stop -->
 <path d="M667 37.8 H673.2 L678.5 43 V49.5 L673.2 54.7 H667 L661.7 49.5 V43 Z" fill="url(#gstop)"/>
 <text x="670.1" y="49.3" font-family="Liberation Sans, sans-serif" font-size="6.2" font-weight="bold" fill="#fff" text-anchor="middle">STOP</text>
 <!-- teapot 2 -->
 <path d="M690.6 41.5 Q692.5 42 694.5 45.5 L695.5 47.5 Q693 46.5 690.6 41.5 Z" fill="#9cc4e4"/>
 <ellipse cx="699.8" cy="45" rx="5" ry="4.6" fill="url(#gtea)"/>
 <circle cx="699.8" cy="39.8" r="1" fill="#a8cce8"/>
 <circle cx="705.8" cy="44.8" r="2.2" fill="none" stroke="#a0c4e0" stroke-width="0.9"/>
</svg>

<svg class="abs" style="left:0;top:556px" width="716" height="26" viewBox="0 556 716 26">
 <defs>
  <linearGradient id="sgrad" x1="0" x2="1"><stop offset="0" stop-color="#e04818"/><stop offset="0.5" stop-color="#e8e0d8"/><stop offset="1" stop-color="#30c8e8"/></linearGradient>
  <linearGradient id="rainbow" x1="0" x2="1"><stop offset="0" stop-color="#ff2020"/><stop offset="0.2" stop-color="#ffe000"/><stop offset="0.4" stop-color="#20e020"/><stop offset="0.6" stop-color="#20d0ff"/><stop offset="0.8" stop-color="#2020ff"/><stop offset="1" stop-color="#ff20c0"/></linearGradient>
  <linearGradient id="grayg" x1="0" x2="1"><stop offset="0" stop-color="#303030"/><stop offset="1" stop-color="#f0f0f0"/></linearGradient>
 </defs>
 <!-- window icon -->
 <rect x="5.5" y="566.3" width="11.5" height="9.4" fill="#b2bcc8" stroke="#6e7c92" stroke-width="1"/>
 <rect x="6" y="566.8" width="10.5" height="2" fill="#7c8ca2"/>
 <rect x="6.8" y="567.3" width="2.5" height="0.9" fill="#333"/>
 <!-- active blue button -->
 <rect x="24" y="563.8" width="14.2" height="14.2" rx="2" fill="#5b8ac6"/>
 <rect x="26" y="568" width="12" height="2.2" fill="#e04040"/>
 <rect x="26" y="571" width="12" height="2.2" fill="#40b040"/>
 <rect x="26" y="574" width="12" height="2.2" fill="#5a8ad8"/>
 <path d="M28.5 566 H27.5 V577.5 H28.5 M35.5 566 H36.5 V577.5 H35.5" fill="none" stroke="#a8a8a8" stroke-width="0.8"/>
 <path d="M39 575 V579 H35 Z" fill="#d8d8d8"/>
 <!-- info -->
 <circle cx="50.7" cy="571.3" r="5.5" fill="#8494aa"/>
 <path d="M50.7 569.3 V574.5 M49.2 574.5 H52.4 M49.4 569.5 H50.7" stroke="#fff" stroke-width="1.3" fill="none"/>
 <rect x="50" y="566.8" width="1.5" height="1.5" fill="#fff"/>
 <!-- gradient -->
 <rect x="65" y="566" width="12" height="11" fill="url(#sgrad)"/>
 <!-- HSL -->
 <text x="91" y="571.5" font-family="Liberation Sans, sans-serif" font-size="6.5" font-weight="bold" fill="#8a9ab0" text-anchor="middle">HSL</text>
 <rect x="85" y="572.3" width="12" height="2" fill="url(#rainbow)"/>
 <rect x="85" y="574.5" width="12" height="1.6" fill="url(#grayg)"/>
 <!-- color bars -->
 <rect x="105" y="567" width="8" height="1.8" fill="#30c8e8"/><rect x="114" y="567" width="3" height="1.8" fill="#e04030"/>
 <rect x="105" y="570" width="5" height="1.8" fill="#d07090"/><rect x="111" y="570" width="6" height="1.8" fill="#20e040"/>
 <rect x="105" y="573" width="3" height="1.8" fill="#f0f020"/><rect x="109" y="573" width="8" height="1.8" fill="#a0b8a0"/>
 <!-- histogram -->
 <path d="M125 577 V569 L126.5 570 L127.5 567 L128.5 569 L130 570 L131 572 L132.5 573 L133.5 570 L135 569.5 L136 566 L137 566 V577 Z" fill="#7e8ea2"/>
 <!-- curves -->
 <path d="M145 566.5 H154 M145 568.5 H152 M145 570.5 H150 M145 572.5 H148 M145 574.5 H146 M153 574.5 H157 M153 576.3 H157" stroke="#8a9ab0" stroke-width="0.8"/>
 <path d="M145.2 576.8 L156.5 565.5" stroke="#30b030" stroke-width="1.2"/>
 <path d="M147 577 L157 567" stroke="#e03838" stroke-width="1.2"/>
 <path d="M149 577 L157 569" stroke="#3890e0" stroke-width="1.2"/>
 <!-- aperture -->
 <circle cx="171.5" cy="571.5" r="5.4" fill="#8494aa"/>
 <circle cx="171.5" cy="571.5" r="2" fill="#464646"/>
 <path d="M171.5 566 V577 M166 571.5 H177 M167.6 567.6 L175.4 575.4 M175.4 567.6 L167.6 575.4" stroke="#464646" stroke-width="0.7"/>
 <!-- image icon -->
 <rect x="185" y="566" width="12" height="11" fill="#7888a0"/>
 <path d="M185 571.5 Q190 569.5 197 572 V577 H185 Z" fill="#68b040"/>
 <rect x="193" y="566" width="3" height="2.4" fill="#f0e020"/>
 <!-- blue curve button -->
 <rect x="204" y="563.8" width="14.5" height="14.2" rx="2.2" fill="#5b8ac6"/>
 <rect x="206.3" y="567.3" width="10.5" height="10.2" fill="#5b8ac6" stroke="#6a6a70" stroke-width="0.9"/>
 <path d="M207 577 Q209 569.5 216.5 569" stroke="#fff" stroke-width="0.9" fill="none"/>
 <path d="M219.5 575 V579 H215.5 Z" fill="#d8d8d8"/>
 <!-- LUT -->
 <rect x="225" y="566" width="12" height="11" fill="#7e8ea2"/>
 <text x="231" y="574.6" font-family="Liberation Sans, sans-serif" font-size="6.8" font-weight="bold" fill="#303438" text-anchor="middle">LUT</text>
 <path d="M239.5 575 V579 H235.5 Z" fill="#d8d8d8"/>
 <!-- H -->
 <path d="M248 566 V576 M253.5 566 V576 M248 570.8 H253.5" stroke="#7e8ea2" stroke-width="1.8"/>
 <!-- arrow -->
 <path d="M266 566 V577 M276 566 V577" stroke="#7e8ea2" stroke-width="0.8" stroke-dasharray="2 1"/>
 <path d="M267.5 571.5 H274.5 M269.5 569.5 L267.5 571.5 L269.5 573.5 M272.5 569.5 L274.5 571.5 L272.5 573.5" stroke="#f07838" stroke-width="1.2" fill="none"/>
 <!-- red cyan -->
 <rect x="286" y="566" width="4.2" height="11" fill="#e85858"/>
 <rect x="292" y="566" width="4.2" height="11" fill="#28c8e0"/>
 <path d="M299.2 575 V579 H295.2 Z" fill="#d8d8d8"/>
 <!-- star box -->
 <rect x="305.5" y="566.3" width="10.5" height="10.5" fill="none" stroke="#7e8ea2" stroke-width="1"/>
 <path d="M310.75 568 V575 M307.3 571.5 H314.2 M308.3 569 L313.2 574 M313.2 569 L308.3 574" stroke="#8494aa" stroke-width="0.9"/>
 <circle cx="310.75" cy="571.5" r="1.6" fill="#8494aa"/>
 <!-- right window icon -->
 <rect x="680.5" y="566" width="9.4" height="9.8" fill="#383030" stroke="#98d0f8" stroke-width="1"/>
 <rect x="682" y="568.6" width="6.4" height="1.4" fill="#30d030"/>
 <path d="M682 572 H688.4 M682 574 H688.4" stroke="#504040" stroke-width="0.5"/>
 <rect x="688.5" y="565.5" width="2" height="1.6" fill="#f060a0"/>
 <!-- chevrons -->
 <path d="M701.5 567.5 L705 570.3 L708.5 567.5 M701.5 571.3 L705 574.1 L708.5 571.3" stroke="#ececec" stroke-width="1.1" fill="none"/>
</svg>
<!--speck--><svg id="speck" width="716" height="582" style="position:absolute;left:0;top:0" shape-rendering="crispEdges"><rect x="365.5" y="391.6" width="1.3" height="1.3" fill="#f89a38"/><rect x="366.8" y="391.6" width="1.3" height="1.3" fill="#fff8ee"/><rect x="368.0" y="391.6" width="1.3" height="1.3" fill="#e86a20"/><rect x="369.2" y="391.6" width="1.3" height="1.3" fill="#7a3a20"/><rect x="370.5" y="391.6" width="1.3" height="1.3" fill="#fff8ee"/><rect x="371.8" y="391.6" width="1.3" height="1.3" fill="#fff8ee"/><rect x="373.0" y="391.6" width="1.3" height="1.3" fill="#120a08"/><rect x="374.2" y="391.6" width="1.3" height="1.3" fill="#fff8ee"/><rect x="375.5" y="391.6" width="1.3" height="1.3" fill="#f89a38"/><rect x="376.8" y="391.6" width="1.3" height="1.3" fill="#1a1010"/><rect x="378.0" y="391.6" width="1.3" height="1.3" fill="#fff8ee"/><rect x="379.2" y="391.6" width="1.3" height="1.3" fill="#120a08"/><rect x="380.5" y="391.6" width="1.3" height="1.3" fill="#f8dca8"/><rect x="381.8" y="391.6" width="1.3" height="1.3" fill="#fff8ee"/><rect x="383.0" y="391.6" width="1.3" height="1.3" fill="#fff8ee"/><rect x="384.2" y="391.6" width="1.3" height="1.3" fill="#e86a20"/><rect x="385.5" y="391.6" width="1.3" height="1.3" fill="#e86a20"/><rect x="365.7" y="392.9" width="1.3" height="1.3" fill="#fff8ee"/><rect x="367.0" y="392.9" width="1.3" height="1.3" fill="#f8dca8"/><rect x="368.2" y="392.9" width="1.3" height="1.3" fill="#fff8ee"/><rect x="369.5" y="392.9" width="1.3" height="1.3" fill="#120a08"/><rect x="370.7" y="392.9" width="1.3" height="1.3" fill="#e86a20"/><rect x="372.0" y="392.9" width="1.3" height="1.3" fill="#fff8ee"/><rect x="373.2" y="392.9" width="1.3" height="1.3" fill="#1a1010"/><rect x="374.5" y="392.9" width="1.3" height="1.3" fill="#fff8ee"/><rect x="375.7" y="392.9" width="1.3" height="1.3" fill="#f8dca8"/><rect x="377.0" y="392.9" width="1.3" height="1.3" fill="#7a3a20"/><rect x="378.2" y="392.9" width="1.3" height="1.3" fill="#7a3a20"/><rect x="379.5" y="392.9" width="1.3" height="1.3" fill="#1a1010"/><rect x="380.7" y="392.9" width="1.3" height="1.3" fill="#fff8ee"/><rect x="382.0" y="392.9" width="1.3" height="1.3" fill="#1a1010"/><rect x="383.2" y="392.9" width="1.3" height="1.3" fill="#1a1010"/><rect x="384.5" y="392.9" width="1.3" height="1.3" fill="#e86a20"/><rect x="385.7" y="392.9" width="1.3" height="1.3" fill="#fff8ee"/><rect x="365.9" y="394.1" width="1.3" height="1.3" fill="#f8dca8"/><rect x="367.2" y="394.1" width="1.3" height="1.3" fill="#fff8ee"/><rect x="368.4" y="394.1" width="1.3" height="1.3" fill="#120a08"/><rect x="369.7" y="394.1" width="1.3" height="1.3" fill="#fff8ee"/><rect x="370.9" y="394.1" width="1.3" height="1.3" fill="#f8e8c8"/><rect x="372.2" y="394.1" width="1.3" height="1.3" fill="#e86a20"/><rect x="373.4" y="394.1" width="1.3" height="1.3" fill="#fff8ee"/><rect x="374.7" y="394.1" width="1.3" height="1.3" fill="#120a08"/><rect x="375.9" y="394.1" width="1.3" height="1.3" fill="#fff8ee"/><rect x="377.2" y="394.1" width="1.3" height="1.3" fill="#1a1010"/><rect x="378.4" y="394.1" width="1.3" height="1.3" fill="#f8e8c8"/><rect x="379.7" y="394.1" width="1.3" height="1.3" fill="#120a08"/><rect x="380.9" y="394.1" width="1.3" height="1.3" fill="#7a3a20"/><rect x="382.2" y="394.1" width="1.3" height="1.3" fill="#fff8ee"/><rect x="383.4" y="394.1" width="1.3" height="1.3" fill="#fff8ee"/><rect x="384.7" y="394.1" width="1.3" height="1.3" fill="#1a1010"/><rect x="385.9" y="394.1" width="1.3" height="1.3" fill="#1a1010"/><rect x="366.1" y="395.4" width="1.3" height="1.3" fill="#7a3a20"/><rect x="367.4" y="395.4" width="1.3" height="1.3" fill="#f8dca8"/><rect x="368.6" y="395.4" width="1.3" height="1.3" fill="#f89a38"/><rect x="369.9" y="395.4" width="1.3" height="1.3" fill="#fff8ee"/><rect x="371.1" y="395.4" width="1.3" height="1.3" fill="#120a08"/><rect x="372.4" y="395.4" width="1.3" height="1.3" fill="#f4f4f4"/><rect x="373.6" y="395.4" width="1.3" height="1.3" fill="#fff8ee"/><rect x="374.9" y="395.4" width="1.3" height="1.3" fill="#1a1010"/><rect x="376.1" y="395.4" width="1.3" height="1.3" fill="#fff8ee"/><rect x="377.4" y="395.4" width="1.3" height="1.3" fill="#1a1010"/><rect x="378.6" y="395.4" width="1.3" height="1.3" fill="#f8dca8"/><rect x="379.9" y="395.4" width="1.3" height="1.3" fill="#120a08"/><rect x="381.1" y="395.4" width="1.3" height="1.3" fill="#7a3a20"/><rect x="382.4" y="395.4" width="1.3" height="1.3" fill="#120a08"/><rect x="383.6" y="395.4" width="1.3" height="1.3" fill="#e86a20"/><rect x="384.9" y="395.4" width="1.3" height="1.3" fill="#d02010"/><rect x="366.4" y="396.6" width="1.3" height="1.3" fill="#f89a38"/><rect x="367.6" y="396.6" width="1.3" height="1.3" fill="#120a08"/><rect x="368.9" y="396.6" width="1.3" height="1.3" fill="#1a1010"/><rect x="370.1" y="396.6" width="1.3" height="1.3" fill="#120a08"/><rect x="371.4" y="396.6" width="1.3" height="1.3" fill="#f89a38"/><rect x="372.6" y="396.6" width="1.3" height="1.3" fill="#f8e8c8"/><rect x="373.9" y="396.6" width="1.3" height="1.3" fill="#f8dca8"/><rect x="375.1" y="396.6" width="1.3" height="1.3" fill="#d02010"/><rect x="376.4" y="396.6" width="1.3" height="1.3" fill="#fff8ee"/><rect x="377.6" y="396.6" width="1.3" height="1.3" fill="#f4f4f4"/><rect x="378.9" y="396.6" width="1.3" height="1.3" fill="#d02010"/><rect x="380.1" y="396.6" width="1.3" height="1.3" fill="#f8dca8"/><rect x="381.4" y="396.6" width="1.3" height="1.3" fill="#fff8ee"/><rect x="382.6" y="396.6" width="1.3" height="1.3" fill="#1a1010"/><rect x="383.9" y="396.6" width="1.3" height="1.3" fill="#f8e8c8"/><rect x="385.1" y="396.6" width="1.3" height="1.3" fill="#120a08"/><rect x="366.6" y="397.9" width="1.3" height="1.3" fill="#120a08"/><rect x="367.8" y="397.9" width="1.3" height="1.3" fill="#f89a38"/><rect x="369.1" y="397.9" width="1.3" height="1.3" fill="#f4f4f4"/><rect x="370.3" y="397.9" width="1.3" height="1.3" fill="#120a08"/><rect x="371.6" y="397.9" width="1.3" height="1.3" fill="#f8e8c8"/><rect x="372.8" y="397.9" width="1.3" height="1.3" fill="#1a1010"/><rect x="374.1" y="397.9" width="1.3" height="1.3" fill="#fff8ee"/><rect x="375.3" y="397.9" width="1.3" height="1.3" fill="#fff8ee"/><rect x="376.6" y="397.9" width="1.3" height="1.3" fill="#120a08"/><rect x="377.8" y="397.9" width="1.3" height="1.3" fill="#e86a20"/><rect x="379.1" y="397.9" width="1.3" height="1.3" fill="#fff8ee"/><rect x="380.3" y="397.9" width="1.3" height="1.3" fill="#d02010"/><rect x="381.6" y="397.9" width="1.3" height="1.3" fill="#f89a38"/><rect x="382.8" y="397.9" width="1.3" height="1.3" fill="#fff8ee"/><rect x="384.1" y="397.9" width="1.3" height="1.3" fill="#120a08"/><rect x="385.3" y="397.9" width="1.3" height="1.3" fill="#e86a20"/><rect x="366.8" y="399.1" width="1.3" height="1.3" fill="#fff8ee"/><rect x="368.0" y="399.1" width="1.3" height="1.3" fill="#7a3a20"/><rect x="369.3" y="399.1" width="1.3" height="1.3" fill="#fff8ee"/><rect x="370.5" y="399.1" width="1.3" height="1.3" fill="#d02010"/><rect x="371.8" y="399.1" width="1.3" height="1.3" fill="#120a08"/><rect x="373.0" y="399.1" width="1.3" height="1.3" fill="#1a1010"/><rect x="374.3" y="399.1" width="1.3" height="1.3" fill="#d02010"/><rect x="375.5" y="399.1" width="1.3" height="1.3" fill="#f89a38"/><rect x="376.8" y="399.1" width="1.3" height="1.3" fill="#f89a38"/><rect x="378.0" y="399.1" width="1.3" height="1.3" fill="#f4f4f4"/><rect x="379.3" y="399.1" width="1.3" height="1.3" fill="#f89a38"/><rect x="380.5" y="399.1" width="1.3" height="1.3" fill="#1a1010"/><rect x="381.8" y="399.1" width="1.3" height="1.3" fill="#120a08"/><rect x="383.0" y="399.1" width="1.3" height="1.3" fill="#1a1010"/><rect x="384.3" y="399.1" width="1.3" height="1.3" fill="#d02010"/><rect x="385.5" y="399.1" width="1.3" height="1.3" fill="#120a08"/><rect x="367.0" y="400.4" width="1.3" height="1.3" fill="#fff8ee"/><rect x="368.3" y="400.4" width="1.3" height="1.3" fill="#fff8ee"/><rect x="369.5" y="400.4" width="1.3" height="1.3" fill="#f8e8c8"/><rect x="370.8" y="400.4" width="1.3" height="1.3" fill="#120a08"/><rect x="372.0" y="400.4" width="1.3" height="1.3" fill="#f4f4f4"/><rect x="373.3" y="400.4" width="1.3" height="1.3" fill="#7a3a20"/><rect x="374.5" y="400.4" width="1.3" height="1.3" fill="#fff8ee"/><rect x="375.8" y="400.4" width="1.3" height="1.3" fill="#fff8ee"/><rect x="377.0" y="400.4" width="1.3" height="1.3" fill="#f4f4f4"/><rect x="378.3" y="400.4" width="1.3" height="1.3" fill="#f4f4f4"/><rect x="379.5" y="400.4" width="1.3" height="1.3" fill="#f8e8c8"/><rect x="380.8" y="400.4" width="1.3" height="1.3" fill="#7a3a20"/><rect x="382.0" y="400.4" width="1.3" height="1.3" fill="#1a1010"/><rect x="383.3" y="400.4" width="1.3" height="1.3" fill="#7a3a20"/><rect x="384.5" y="400.4" width="1.3" height="1.3" fill="#120a08"/><rect x="385.8" y="400.4" width="1.3" height="1.3" fill="#f8e8c8"/><rect x="367.2" y="401.6" width="1.3" height="1.3" fill="#f4f4f4"/><rect x="368.5" y="401.6" width="1.3" height="1.3" fill="#e86a20"/><rect x="369.7" y="401.6" width="1.3" height="1.3" fill="#7a3a20"/><rect x="371.0" y="401.6" width="1.3" height="1.3" fill="#f89a38"/><rect x="372.2" y="401.6" width="1.3" height="1.3" fill="#fff8ee"/><rect x="373.5" y="401.6" width="1.3" height="1.3" fill="#120a08"/><rect x="374.7" y="401.6" width="1.3" height="1.3" fill="#f89a38"/><rect x="376.0" y="401.6" width="1.3" height="1.3" fill="#fff8ee"/><rect x="377.2" y="401.6" width="1.3" height="1.3" fill="#1a1010"/><rect x="378.5" y="401.6" width="1.3" height="1.3" fill="#fff8ee"/><rect x="379.7" y="401.6" width="1.3" height="1.3" fill="#120a08"/><rect x="381.0" y="401.6" width="1.3" height="1.3" fill="#fff8ee"/><rect x="382.2" y="401.6" width="1.3" height="1.3" fill="#f8dca8"/><rect x="383.5" y="401.6" width="1.3" height="1.3" fill="#d02010"/><rect x="384.7" y="401.6" width="1.3" height="1.3" fill="#f8e8c8"/><rect x="386.0" y="401.6" width="1.3" height="1.3" fill="#fff8ee"/><rect x="367.4" y="402.9" width="1.3" height="1.3" fill="#f4f4f4"/><rect x="368.7" y="402.9" width="1.3" height="1.3" fill="#f8dca8"/><rect x="369.9" y="402.9" width="1.3" height="1.3" fill="#e86a20"/><rect x="371.2" y="402.9" width="1.3" height="1.3" fill="#e86a20"/><rect x="372.4" y="402.9" width="1.3" height="1.3" fill="#120a08"/><rect x="373.7" y="402.9" width="1.3" height="1.3" fill="#fff8ee"/><rect x="374.9" y="402.9" width="1.3" height="1.3" fill="#fff8ee"/><rect x="376.2" y="402.9" width="1.3" height="1.3" fill="#120a08"/><rect x="377.4" y="402.9" width="1.3" height="1.3" fill="#e86a20"/><rect x="378.7" y="402.9" width="1.3" height="1.3" fill="#120a08"/><rect x="379.9" y="402.9" width="1.3" height="1.3" fill="#f8e8c8"/><rect x="381.2" y="402.9" width="1.3" height="1.3" fill="#fff8ee"/><rect x="382.4" y="402.9" width="1.3" height="1.3" fill="#e86a20"/><rect x="383.7" y="402.9" width="1.3" height="1.3" fill="#120a08"/><rect x="384.9" y="402.9" width="1.3" height="1.3" fill="#f8e8c8"/><rect x="367.6" y="404.1" width="1.3" height="1.3" fill="#f4f4f4"/><rect x="368.9" y="404.1" width="1.3" height="1.3" fill="#e86a20"/><rect x="370.1" y="404.1" width="1.3" height="1.3" fill="#f89a38"/><rect x="371.4" y="404.1" width="1.3" height="1.3" fill="#7a3a20"/><rect x="372.6" y="404.1" width="1.3" height="1.3" fill="#e86a20"/><rect x="373.9" y="404.1" width="1.3" height="1.3" fill="#f8dca8"/><rect x="375.1" y="404.1" width="1.3" height="1.3" fill="#fff8ee"/><rect x="376.4" y="404.1" width="1.3" height="1.3" fill="#fff8ee"/><rect x="377.6" y="404.1" width="1.3" height="1.3" fill="#fff8ee"/><rect x="378.9" y="404.1" width="1.3" height="1.3" fill="#fff8ee"/><rect x="380.1" y="404.1" width="1.3" height="1.3" fill="#f8dca8"/><rect x="381.4" y="404.1" width="1.3" height="1.3" fill="#7a3a20"/><rect x="382.6" y="404.1" width="1.3" height="1.3" fill="#f8dca8"/><rect x="383.9" y="404.1" width="1.3" height="1.3" fill="#fff8ee"/><rect x="385.1" y="404.1" width="1.3" height="1.3" fill="#120a08"/><rect x="367.9" y="405.4" width="1.3" height="1.3" fill="#1a1010"/><rect x="369.1" y="405.4" width="1.3" height="1.3" fill="#fff8ee"/><rect x="370.4" y="405.4" width="1.3" height="1.3" fill="#f8e8c8"/><rect x="371.6" y="405.4" width="1.3" height="1.3" fill="#f8e8c8"/><rect x="372.9" y="405.4" width="1.3" height="1.3" fill="#fff8ee"/><rect x="374.1" y="405.4" width="1.3" height="1.3" fill="#fff8ee"/><rect x="375.4" y="405.4" width="1.3" height="1.3" fill="#e86a20"/><rect x="376.6" y="405.4" width="1.3" height="1.3" fill="#120a08"/><rect x="377.9" y="405.4" width="1.3" height="1.3" fill="#f89a38"/><rect x="379.1" y="405.4" width="1.3" height="1.3" fill="#1a1010"/><rect x="380.4" y="405.4" width="1.3" height="1.3" fill="#1a1010"/><rect x="381.6" y="405.4" width="1.3" height="1.3" fill="#f89a38"/><rect x="382.9" y="405.4" width="1.3" height="1.3" fill="#fff8ee"/><rect x="384.1" y="405.4" width="1.3" height="1.3" fill="#f4f4f4"/><rect x="385.4" y="405.4" width="1.3" height="1.3" fill="#120a08"/><rect x="368.1" y="406.6" width="1.3" height="1.3" fill="#1a1010"/><rect x="369.3" y="406.6" width="1.3" height="1.3" fill="#7a3a20"/><rect x="370.6" y="406.6" width="1.3" height="1.3" fill="#7a3a20"/><rect x="371.8" y="406.6" width="1.3" height="1.3" fill="#f4f4f4"/><rect x="373.1" y="406.6" width="1.3" height="1.3" fill="#fff8ee"/><rect x="374.3" y="406.6" width="1.3" height="1.3" fill="#120a08"/><rect x="375.6" y="406.6" width="1.3" height="1.3" fill="#d02010"/><rect x="376.8" y="406.6" width="1.3" height="1.3" fill="#7a3a20"/><rect x="378.1" y="406.6" width="1.3" height="1.3" fill="#d02010"/><rect x="379.3" y="406.6" width="1.3" height="1.3" fill="#120a08"/><rect x="380.6" y="406.6" width="1.3" height="1.3" fill="#e86a20"/><rect x="381.8" y="406.6" width="1.3" height="1.3" fill="#e86a20"/><rect x="383.1" y="406.6" width="1.3" height="1.3" fill="#e86a20"/><rect x="384.3" y="406.6" width="1.3" height="1.3" fill="#e86a20"/><rect x="385.6" y="406.6" width="1.3" height="1.3" fill="#fff8ee"/><rect x="368.3" y="407.9" width="1.3" height="1.3" fill="#120a08"/><rect x="369.5" y="407.9" width="1.3" height="1.3" fill="#7a3a20"/><rect x="370.8" y="407.9" width="1.3" height="1.3" fill="#e86a20"/><rect x="372.0" y="407.9" width="1.3" height="1.3" fill="#fff8ee"/><rect x="373.3" y="407.9" width="1.3" height="1.3" fill="#f8dca8"/><rect x="374.5" y="407.9" width="1.3" height="1.3" fill="#fff8ee"/><rect x="375.8" y="407.9" width="1.3" height="1.3" fill="#f8dca8"/><rect x="377.0" y="407.9" width="1.3" height="1.3" fill="#120a08"/><rect x="378.3" y="407.9" width="1.3" height="1.3" fill="#fff8ee"/><rect x="379.5" y="407.9" width="1.3" height="1.3" fill="#fff8ee"/><rect x="380.8" y="407.9" width="1.3" height="1.3" fill="#f89a38"/><rect x="382.0" y="407.9" width="1.3" height="1.3" fill="#1a1010"/><rect x="383.3" y="407.9" width="1.3" height="1.3" fill="#fff8ee"/><rect x="384.5" y="407.9" width="1.3" height="1.3" fill="#fff8ee"/><rect x="385.8" y="407.9" width="1.3" height="1.3" fill="#fff8ee"/><rect x="368.5" y="409.1" width="1.3" height="1.3" fill="#1a1010"/><rect x="369.8" y="409.1" width="1.3" height="1.3" fill="#fff8ee"/><rect x="371.0" y="409.1" width="1.3" height="1.3" fill="#120a08"/><rect x="372.3" y="409.1" width="1.3" height="1.3" fill="#fff8ee"/><rect x="373.5" y="409.1" width="1.3" height="1.3" fill="#f89a38"/><rect x="374.8" y="409.1" width="1.3" height="1.3" fill="#1a1010"/><rect x="376.0" y="409.1" width="1.3" height="1.3" fill="#fff8ee"/><rect x="377.3" y="409.1" width="1.3" height="1.3" fill="#fff8ee"/><rect x="378.5" y="409.1" width="1.3" height="1.3" fill="#f8dca8"/><rect x="379.8" y="409.1" width="1.3" height="1.3" fill="#1a1010"/><rect x="381.0" y="409.1" width="1.3" height="1.3" fill="#e86a20"/><rect x="382.3" y="409.1" width="1.3" height="1.3" fill="#fff8ee"/><rect x="383.5" y="409.1" width="1.3" height="1.3" fill="#7a3a20"/><rect x="384.8" y="409.1" width="1.3" height="1.3" fill="#f8e8c8"/><rect x="368.7" y="410.4" width="1.3" height="1.3" fill="#f89a38"/><rect x="370.0" y="410.4" width="1.3" height="1.3" fill="#1a1010"/><rect x="371.2" y="410.4" width="1.3" height="1.3" fill="#f89a38"/><rect x="372.5" y="410.4" width="1.3" height="1.3" fill="#120a08"/><rect x="373.7" y="410.4" width="1.3" height="1.3" fill="#fff8ee"/><rect x="375.0" y="410.4" width="1.3" height="1.3" fill="#fff8ee"/><rect x="376.2" y="410.4" width="1.3" height="1.3" fill="#120a08"/><rect x="377.5" y="410.4" width="1.3" height="1.3" fill="#120a08"/><rect x="378.7" y="410.4" width="1.3" height="1.3" fill="#120a08"/><rect x="380.0" y="410.4" width="1.3" height="1.3" fill="#120a08"/><rect x="381.2" y="410.4" width="1.3" height="1.3" fill="#f8e8c8"/><rect x="382.5" y="410.4" width="1.3" height="1.3" fill="#fff8ee"/><rect x="383.7" y="410.4" width="1.3" height="1.3" fill="#fff8ee"/><rect x="385.0" y="410.4" width="1.3" height="1.3" fill="#fff8ee"/><rect x="368.9" y="411.6" width="1.3" height="1.3" fill="#f4f4f4"/><rect x="370.2" y="411.6" width="1.3" height="1.3" fill="#f89a38"/><rect x="371.4" y="411.6" width="1.3" height="1.3" fill="#f4f4f4"/><rect x="372.7" y="411.6" width="1.3" height="1.3" fill="#f8e8c8"/><rect x="373.9" y="411.6" width="1.3" height="1.3" fill="#120a08"/><rect x="375.2" y="411.6" width="1.3" height="1.3" fill="#f4f4f4"/><rect x="376.4" y="411.6" width="1.3" height="1.3" fill="#fff8ee"/><rect x="377.7" y="411.6" width="1.3" height="1.3" fill="#120a08"/><rect x="378.9" y="411.6" width="1.3" height="1.3" fill="#fff8ee"/><rect x="380.2" y="411.6" width="1.3" height="1.3" fill="#f8dca8"/><rect x="381.4" y="411.6" width="1.3" height="1.3" fill="#120a08"/><rect x="382.7" y="411.6" width="1.3" height="1.3" fill="#f89a38"/><rect x="383.9" y="411.6" width="1.3" height="1.3" fill="#fff8ee"/><rect x="385.2" y="411.6" width="1.3" height="1.3" fill="#f4f4f4"/><rect x="369.2" y="412.9" width="1.3" height="1.3" fill="#120a08"/><rect x="370.4" y="412.9" width="1.3" height="1.3" fill="#fff8ee"/><rect x="371.7" y="412.9" width="1.3" height="1.3" fill="#d02010"/><rect x="372.9" y="412.9" width="1.3" height="1.3" fill="#120a08"/><rect x="374.2" y="412.9" width="1.3" height="1.3" fill="#f8e8c8"/><rect x="375.4" y="412.9" width="1.3" height="1.3" fill="#7a3a20"/><rect x="376.7" y="412.9" width="1.3" height="1.3" fill="#fff8ee"/><rect x="377.9" y="412.9" width="1.3" height="1.3" fill="#f4f4f4"/><rect x="379.2" y="412.9" width="1.3" height="1.3" fill="#f8e8c8"/><rect x="380.4" y="412.9" width="1.3" height="1.3" fill="#120a08"/><rect x="381.7" y="412.9" width="1.3" height="1.3" fill="#f89a38"/><rect x="382.9" y="412.9" width="1.3" height="1.3" fill="#fff8ee"/><rect x="384.2" y="412.9" width="1.3" height="1.3" fill="#f89a38"/><rect x="385.4" y="412.9" width="1.3" height="1.3" fill="#d02010"/><rect x="369.4" y="414.1" width="1.3" height="1.3" fill="#f8dca8"/><rect x="370.6" y="414.1" width="1.3" height="1.3" fill="#120a08"/><rect x="371.9" y="414.1" width="1.3" height="1.3" fill="#120a08"/><rect x="373.1" y="414.1" width="1.3" height="1.3" fill="#d02010"/><rect x="374.4" y="414.1" width="1.3" height="1.3" fill="#120a08"/><rect x="375.6" y="414.1" width="1.3" height="1.3" fill="#f89a38"/><rect x="376.9" y="414.1" width="1.3" height="1.3" fill="#7a3a20"/><rect x="378.1" y="414.1" width="1.3" height="1.3" fill="#f8dca8"/><rect x="379.4" y="414.1" width="1.3" height="1.3" fill="#1a1010"/><rect x="380.6" y="414.1" width="1.3" height="1.3" fill="#d02010"/><rect x="381.9" y="414.1" width="1.3" height="1.3" fill="#d02010"/><rect x="383.1" y="414.1" width="1.3" height="1.3" fill="#d02010"/><rect x="384.4" y="414.1" width="1.3" height="1.3" fill="#f8dca8"/><rect x="385.6" y="414.1" width="1.3" height="1.3" fill="#d02010"/><rect x="369.6" y="415.4" width="1.3" height="1.3" fill="#f8dca8"/><rect x="370.8" y="415.4" width="1.3" height="1.3" fill="#e86a20"/><rect x="372.1" y="415.4" width="1.3" height="1.3" fill="#f4f4f4"/><rect x="373.3" y="415.4" width="1.3" height="1.3" fill="#d02010"/><rect x="374.6" y="415.4" width="1.3" height="1.3" fill="#f8dca8"/><rect x="375.8" y="415.4" width="1.3" height="1.3" fill="#f8dca8"/><rect x="377.1" y="415.4" width="1.3" height="1.3" fill="#120a08"/><rect x="378.3" y="415.4" width="1.3" height="1.3" fill="#120a08"/><rect x="379.6" y="415.4" width="1.3" height="1.3" fill="#f89a38"/><rect x="380.8" y="415.4" width="1.3" height="1.3" fill="#f4f4f4"/><rect x="382.1" y="415.4" width="1.3" height="1.3" fill="#fff8ee"/><rect x="383.3" y="415.4" width="1.3" height="1.3" fill="#fff8ee"/><rect x="384.6" y="415.4" width="1.3" height="1.3" fill="#d02010"/><rect x="385.8" y="415.4" width="1.3" height="1.3" fill="#f8e8c8"/><rect x="369.8" y="416.6" width="1.3" height="1.3" fill="#120a08"/><rect x="371.0" y="416.6" width="1.3" height="1.3" fill="#f8e8c8"/><rect x="372.3" y="416.6" width="1.3" height="1.3" fill="#f8dca8"/><rect x="373.5" y="416.6" width="1.3" height="1.3" fill="#f4f4f4"/><rect x="374.8" y="416.6" width="1.3" height="1.3" fill="#1a1010"/><rect x="376.0" y="416.6" width="1.3" height="1.3" fill="#f89a38"/><rect x="377.3" y="416.6" width="1.3" height="1.3" fill="#120a08"/><rect x="378.5" y="416.6" width="1.3" height="1.3" fill="#d02010"/><rect x="379.8" y="416.6" width="1.3" height="1.3" fill="#f4f4f4"/><rect x="381.0" y="416.6" width="1.3" height="1.3" fill="#f89a38"/><rect x="382.3" y="416.6" width="1.3" height="1.3" fill="#f89a38"/><rect x="383.5" y="416.6" width="1.3" height="1.3" fill="#fff8ee"/><rect x="384.8" y="416.6" width="1.3" height="1.3" fill="#f8dca8"/><rect x="370.0" y="417.9" width="1.3" height="1.3" fill="#fff8ee"/><rect x="371.3" y="417.9" width="1.3" height="1.3" fill="#f8dca8"/><rect x="372.5" y="417.9" width="1.3" height="1.3" fill="#120a08"/><rect x="373.8" y="417.9" width="1.3" height="1.3" fill="#f8dca8"/><rect x="375.0" y="417.9" width="1.3" height="1.3" fill="#f89a38"/><rect x="376.3" y="417.9" width="1.3" height="1.3" fill="#f8dca8"/><rect x="377.5" y="417.9" width="1.3" height="1.3" fill="#120a08"/><rect x="378.8" y="417.9" width="1.3" height="1.3" fill="#1a1010"/><rect x="380.0" y="417.9" width="1.3" height="1.3" fill="#1a1010"/><rect x="381.3" y="417.9" width="1.3" height="1.3" fill="#fff8ee"/><rect x="382.5" y="417.9" width="1.3" height="1.3" fill="#120a08"/><rect x="383.8" y="417.9" width="1.3" height="1.3" fill="#7a3a20"/><rect x="385.0" y="417.9" width="1.3" height="1.3" fill="#f89a38"/><rect x="370.2" y="419.1" width="1.3" height="1.3" fill="#d02010"/><rect x="371.5" y="419.1" width="1.3" height="1.3" fill="#7a3a20"/><rect x="372.7" y="419.1" width="1.3" height="1.3" fill="#fff8ee"/><rect x="374.0" y="419.1" width="1.3" height="1.3" fill="#7a3a20"/><rect x="375.2" y="419.1" width="1.3" height="1.3" fill="#fff8ee"/><rect x="376.5" y="419.1" width="1.3" height="1.3" fill="#e86a20"/><rect x="377.7" y="419.1" width="1.3" height="1.3" fill="#d02010"/><rect x="379.0" y="419.1" width="1.3" height="1.3" fill="#f4f4f4"/><rect x="380.2" y="419.1" width="1.3" height="1.3" fill="#d02010"/><rect x="381.5" y="419.1" width="1.3" height="1.3" fill="#f8dca8"/><rect x="382.7" y="419.1" width="1.3" height="1.3" fill="#120a08"/><rect x="384.0" y="419.1" width="1.3" height="1.3" fill="#fff8ee"/><rect x="385.2" y="419.1" width="1.3" height="1.3" fill="#e86a20"/><rect x="370.4" y="420.4" width="1.3" height="1.3" fill="#d02010"/><rect x="371.7" y="420.4" width="1.3" height="1.3" fill="#7a3a20"/><rect x="372.9" y="420.4" width="1.3" height="1.3" fill="#f89a38"/><rect x="374.2" y="420.4" width="1.3" height="1.3" fill="#fff8ee"/><rect x="375.4" y="420.4" width="1.3" height="1.3" fill="#d02010"/><rect x="376.7" y="420.4" width="1.3" height="1.3" fill="#f4f4f4"/><rect x="377.9" y="420.4" width="1.3" height="1.3" fill="#e86a20"/><rect x="379.2" y="420.4" width="1.3" height="1.3" fill="#120a08"/><rect x="380.4" y="420.4" width="1.3" height="1.3" fill="#e86a20"/><rect x="381.7" y="420.4" width="1.3" height="1.3" fill="#f4f4f4"/><rect x="382.9" y="420.4" width="1.3" height="1.3" fill="#fff8ee"/><rect x="384.2" y="420.4" width="1.3" height="1.3" fill="#f4f4f4"/><rect x="385.4" y="420.4" width="1.3" height="1.3" fill="#fff8ee"/><rect x="370.7" y="421.6" width="1.3" height="1.3" fill="#fff8ee"/><rect x="371.9" y="421.6" width="1.3" height="1.3" fill="#fff8ee"/><rect x="373.2" y="421.6" width="1.3" height="1.3" fill="#fff8ee"/><rect x="374.4" y="421.6" width="1.3" height="1.3" fill="#fff8ee"/><rect x="375.7" y="421.6" width="1.3" height="1.3" fill="#1a1010"/><rect x="376.9" y="421.6" width="1.3" height="1.3" fill="#120a08"/><rect x="378.2" y="421.6" width="1.3" height="1.3" fill="#d02010"/><rect x="379.4" y="421.6" width="1.3" height="1.3" fill="#7a3a20"/><rect x="380.7" y="421.6" width="1.3" height="1.3" fill="#fff8ee"/><rect x="381.9" y="421.6" width="1.3" height="1.3" fill="#1a1010"/><rect x="383.2" y="421.6" width="1.3" height="1.3" fill="#1a1010"/><rect x="384.4" y="421.6" width="1.3" height="1.3" fill="#120a08"/><rect x="385.7" y="421.6" width="1.3" height="1.3" fill="#7a3a20"/><rect x="370.9" y="422.9" width="1.3" height="1.3" fill="#f89a38"/><rect x="372.1" y="422.9" width="1.3" height="1.3" fill="#fff8ee"/><rect x="373.4" y="422.9" width="1.3" height="1.3" fill="#120a08"/><rect x="374.6" y="422.9" width="1.3" height="1.3" fill="#120a08"/><rect x="375.9" y="422.9" width="1.3" height="1.3" fill="#fff8ee"/><rect x="377.1" y="422.9" width="1.3" height="1.3" fill="#fff8ee"/><rect x="378.4" y="422.9" width="1.3" height="1.3" fill="#fff8ee"/><rect x="379.6" y="422.9" width="1.3" height="1.3" fill="#d02010"/><rect x="380.9" y="422.9" width="1.3" height="1.3" fill="#f4f4f4"/><rect x="382.1" y="422.9" width="1.3" height="1.3" fill="#7a3a20"/><rect x="383.4" y="422.9" width="1.3" height="1.3" fill="#fff8ee"/><rect x="384.6" y="422.9" width="1.3" height="1.3" fill="#120a08"/><rect x="385.9" y="422.9" width="1.3" height="1.3" fill="#f4f4f4"/><path d="M366 401 L349 424.5 L370 424.5 Z" fill="#1a1a1c"/><rect x="364.8" y="403.6" width="1.6" height="1.6" fill="#1e1e22"/><rect x="363.5" y="405.2" width="1.6" height="1.6" fill="#303030"/><rect x="365.1" y="405.2" width="1.6" height="1.6" fill="#505050"/><rect x="362.3" y="406.8" width="1.6" height="1.6" fill="#1e1e22"/><rect x="363.9" y="406.8" width="1.6" height="1.6" fill="#505050"/><rect x="365.5" y="406.8" width="1.6" height="1.6" fill="#505050"/><rect x="361.1" y="408.4" width="1.6" height="1.6" fill="#1e1e22"/><rect x="362.7" y="408.4" width="1.6" height="1.6" fill="#1e1e22"/><rect x="364.3" y="408.4" width="1.6" height="1.6" fill="#262626"/><rect x="365.9" y="408.4" width="1.6" height="1.6" fill="#1e1e22"/><rect x="359.8" y="410.0" width="1.6" height="1.6" fill="#262626"/><rect x="361.4" y="410.0" width="1.6" height="1.6" fill="#3c3c3c"/><rect x="363.0" y="410.0" width="1.6" height="1.6" fill="#1e1e22"/><rect x="364.6" y="410.0" width="1.6" height="1.6" fill="#505050"/><rect x="366.2" y="410.0" width="1.6" height="1.6" fill="#3c3c3c"/><rect x="358.6" y="411.6" width="1.6" height="1.6" fill="#262626"/><rect x="360.2" y="411.6" width="1.6" height="1.6" fill="#262626"/><rect x="361.8" y="411.6" width="1.6" height="1.6" fill="#3c3c3c"/><rect x="363.4" y="411.6" width="1.6" height="1.6" fill="#303030"/><rect x="365.0" y="411.6" width="1.6" height="1.6" fill="#505050"/><rect x="366.6" y="411.6" width="1.6" height="1.6" fill="#1e1e22"/><rect x="357.3" y="413.2" width="1.6" height="1.6" fill="#1e1e22"/><rect x="358.9" y="413.2" width="1.6" height="1.6" fill="#161616"/><rect x="360.5" y="413.2" width="1.6" height="1.6" fill="#262626"/><rect x="362.1" y="413.2" width="1.6" height="1.6" fill="#303030"/><rect x="363.7" y="413.2" width="1.6" height="1.6" fill="#161616"/><rect x="365.3" y="413.2" width="1.6" height="1.6" fill="#3c3c3c"/><rect x="366.9" y="413.2" width="1.6" height="1.6" fill="#505050"/><rect x="356.1" y="414.8" width="1.6" height="1.6" fill="#3c3c3c"/><rect x="357.7" y="414.8" width="1.6" height="1.6" fill="#303030"/><rect x="359.3" y="414.8" width="1.6" height="1.6" fill="#505050"/><rect x="360.9" y="414.8" width="1.6" height="1.6" fill="#3c3c3c"/><rect x="362.5" y="414.8" width="1.6" height="1.6" fill="#1e1e22"/><rect x="364.1" y="414.8" width="1.6" height="1.6" fill="#3c3c3c"/><rect x="365.7" y="414.8" width="1.6" height="1.6" fill="#1e1e22"/><rect x="367.3" y="414.8" width="1.6" height="1.6" fill="#3c3c3c"/><rect x="354.9" y="416.4" width="1.6" height="1.6" fill="#3c3c3c"/><rect x="356.5" y="416.4" width="1.6" height="1.6" fill="#1e1e22"/><rect x="358.1" y="416.4" width="1.6" height="1.6" fill="#505050"/><rect x="359.7" y="416.4" width="1.6" height="1.6" fill="#303030"/><rect x="361.3" y="416.4" width="1.6" height="1.6" fill="#505050"/><rect x="362.9" y="416.4" width="1.6" height="1.6" fill="#1e1e22"/><rect x="364.5" y="416.4" width="1.6" height="1.6" fill="#3c3c3c"/><rect x="366.1" y="416.4" width="1.6" height="1.6" fill="#1e1e22"/><rect x="367.7" y="416.4" width="1.6" height="1.6" fill="#505050"/><rect x="353.6" y="418.0" width="1.6" height="1.6" fill="#505050"/><rect x="355.2" y="418.0" width="1.6" height="1.6" fill="#1e1e22"/><rect x="356.8" y="418.0" width="1.6" height="1.6" fill="#1e1e22"/><rect x="358.4" y="418.0" width="1.6" height="1.6" fill="#1e1e22"/><rect x="360.0" y="418.0" width="1.6" height="1.6" fill="#303030"/><rect x="361.6" y="418.0" width="1.6" height="1.6" fill="#3c3c3c"/><rect x="363.2" y="418.0" width="1.6" height="1.6" fill="#161616"/><rect x="364.8" y="418.0" width="1.6" height="1.6" fill="#1e1e22"/><rect x="366.4" y="418.0" width="1.6" height="1.6" fill="#3c3c3c"/><rect x="368.0" y="418.0" width="1.6" height="1.6" fill="#1e1e22"/><rect x="352.4" y="419.6" width="1.6" height="1.6" fill="#262626"/><rect x="354.0" y="419.6" width="1.6" height="1.6" fill="#161616"/><rect x="355.6" y="419.6" width="1.6" height="1.6" fill="#3c3c3c"/><rect x="357.2" y="419.6" width="1.6" height="1.6" fill="#3c3c3c"/><rect x="358.8" y="419.6" width="1.6" height="1.6" fill="#3c3c3c"/><rect x="360.4" y="419.6" width="1.6" height="1.6" fill="#303030"/><rect x="362.0" y="419.6" width="1.6" height="1.6" fill="#505050"/><rect x="363.6" y="419.6" width="1.6" height="1.6" fill="#505050"/><rect x="365.2" y="419.6" width="1.6" height="1.6" fill="#1e1e22"/><rect x="366.8" y="419.6" width="1.6" height="1.6" fill="#3c3c3c"/><rect x="368.4" y="419.6" width="1.6" height="1.6" fill="#1e1e22"/><rect x="351.2" y="421.2" width="1.6" height="1.6" fill="#1e1e22"/><rect x="352.8" y="421.2" width="1.6" height="1.6" fill="#1e1e22"/><rect x="354.4" y="421.2" width="1.6" height="1.6" fill="#262626"/><rect x="356.0" y="421.2" width="1.6" height="1.6" fill="#1e1e22"/><rect x="357.6" y="421.2" width="1.6" height="1.6" fill="#505050"/><rect x="359.2" y="421.2" width="1.6" height="1.6" fill="#1e1e22"/><rect x="360.8" y="421.2" width="1.6" height="1.6" fill="#3c3c3c"/><rect x="362.4" y="421.2" width="1.6" height="1.6" fill="#303030"/><rect x="364.0" y="421.2" width="1.6" height="1.6" fill="#3c3c3c"/><rect x="365.6" y="421.2" width="1.6" height="1.6" fill="#1e1e22"/><rect x="367.2" y="421.2" width="1.6" height="1.6" fill="#505050"/><rect x="368.8" y="421.2" width="1.6" height="1.6" fill="#1e1e22"/><rect x="349.9" y="422.8" width="1.6" height="1.6" fill="#303030"/><rect x="351.5" y="422.8" width="1.6" height="1.6" fill="#262626"/><rect x="353.1" y="422.8" width="1.6" height="1.6" fill="#3c3c3c"/><rect x="354.7" y="422.8" width="1.6" height="1.6" fill="#3c3c3c"/><rect x="356.3" y="422.8" width="1.6" height="1.6" fill="#3c3c3c"/><rect x="357.9" y="422.8" width="1.6" height="1.6" fill="#3c3c3c"/><rect x="359.5" y="422.8" width="1.6" height="1.6" fill="#1e1e22"/><rect x="361.1" y="422.8" width="1.6" height="1.6" fill="#161616"/><rect x="362.7" y="422.8" width="1.6" height="1.6" fill="#262626"/><rect x="364.3" y="422.8" width="1.6" height="1.6" fill="#303030"/><rect x="365.9" y="422.8" width="1.6" height="1.6" fill="#3c3c3c"/><rect x="367.5" y="422.8" width="1.6" height="1.6" fill="#3c3c3c"/><rect x="369.1" y="422.8" width="1.6" height="1.6" fill="#505050"/><rect x="462" y="85.8" width="46" height="1" fill="#1c1c20"/></svg><!--/speck-->
</body></html>
